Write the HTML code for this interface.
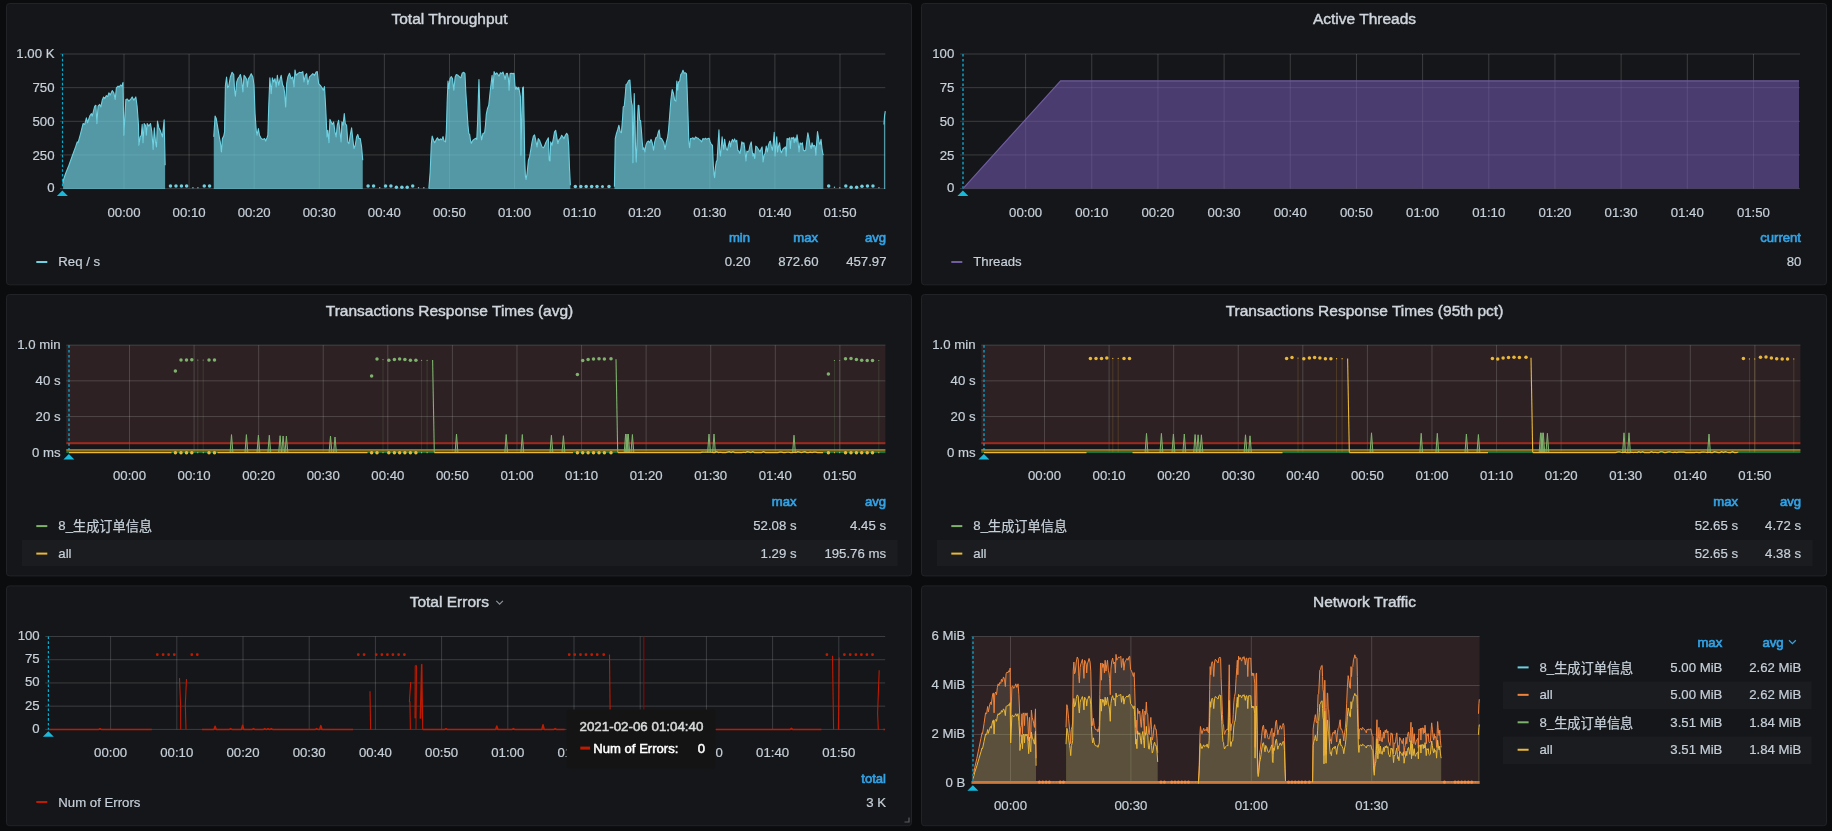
<!DOCTYPE html>
<html lang="en"><head><meta charset="utf-8"><title>JMeter Dashboard</title>
<style>
html,body{margin:0;padding:0;background:#0b0c0e;overflow:hidden}
svg{display:block;will-change:transform}
text{white-space:pre;stroke:#c7d0d9;stroke-width:.2px}
.t{stroke:#cfd5dc;stroke-width:.45px}
.h{stroke:#33a2e5;stroke-width:.65px}
.b{stroke-width:.5px}
.c{stroke:#c7d0d9;stroke-width:.25px}
.bw{stroke:#fff}.bg{stroke:#d8d9da}
</style></head><body>
<svg width="1832" height="831" viewBox="0 0 1832 831" font-family='"Liberation Sans", "Noto Sans CJK SC", sans-serif'>
<rect width="1832" height="831" fill="#0b0c0e"/>
<rect x="6.5" y="3.5" width="905" height="281.3" rx="3" ry="3" fill="#141619" stroke="#212327" stroke-width="1"/>
<rect x="921.5" y="3.5" width="905" height="281.3" rx="3" ry="3" fill="#141619" stroke="#212327" stroke-width="1"/>
<rect x="6.5" y="294.5" width="905" height="281.4" rx="3" ry="3" fill="#141619" stroke="#212327" stroke-width="1"/>
<rect x="921.5" y="294.5" width="905" height="281.4" rx="3" ry="3" fill="#141619" stroke="#212327" stroke-width="1"/>
<rect x="6.5" y="585.9" width="905" height="239.8" rx="3" ry="3" fill="#141619" stroke="#212327" stroke-width="1"/>
<rect x="921.5" y="585.9" width="905" height="239.8" rx="3" ry="3" fill="#141619" stroke="#212327" stroke-width="1"/>
<text x="449.5" y="24.3" text-anchor="middle" class="t" font-size="15.5" fill="#cfd5dc">Total Throughput</text>
<line x1="60" y1="188.6" x2="885.3" y2="188.6" stroke="rgba(200,200,200,0.22)" stroke-width="1"/>
<line x1="60" y1="154.95" x2="885.3" y2="154.95" stroke="rgba(200,200,200,0.22)" stroke-width="1"/>
<line x1="60" y1="121.3" x2="885.3" y2="121.3" stroke="rgba(200,200,200,0.22)" stroke-width="1"/>
<line x1="60" y1="87.65" x2="885.3" y2="87.65" stroke="rgba(200,200,200,0.22)" stroke-width="1"/>
<line x1="60" y1="54" x2="885.3" y2="54" stroke="rgba(200,200,200,0.22)" stroke-width="1"/>
<line x1="124" y1="54" x2="124" y2="188.6" stroke="rgba(200,200,200,0.22)" stroke-width="1"/>
<line x1="189.09" y1="54" x2="189.09" y2="188.6" stroke="rgba(200,200,200,0.22)" stroke-width="1"/>
<line x1="254.18" y1="54" x2="254.18" y2="188.6" stroke="rgba(200,200,200,0.22)" stroke-width="1"/>
<line x1="319.27" y1="54" x2="319.27" y2="188.6" stroke="rgba(200,200,200,0.22)" stroke-width="1"/>
<line x1="384.36" y1="54" x2="384.36" y2="188.6" stroke="rgba(200,200,200,0.22)" stroke-width="1"/>
<line x1="449.45" y1="54" x2="449.45" y2="188.6" stroke="rgba(200,200,200,0.22)" stroke-width="1"/>
<line x1="514.54" y1="54" x2="514.54" y2="188.6" stroke="rgba(200,200,200,0.22)" stroke-width="1"/>
<line x1="579.63" y1="54" x2="579.63" y2="188.6" stroke="rgba(200,200,200,0.22)" stroke-width="1"/>
<line x1="644.72" y1="54" x2="644.72" y2="188.6" stroke="rgba(200,200,200,0.22)" stroke-width="1"/>
<line x1="709.81" y1="54" x2="709.81" y2="188.6" stroke="rgba(200,200,200,0.22)" stroke-width="1"/>
<line x1="774.9" y1="54" x2="774.9" y2="188.6" stroke="rgba(200,200,200,0.22)" stroke-width="1"/>
<line x1="839.99" y1="54" x2="839.99" y2="188.6" stroke="rgba(200,200,200,0.22)" stroke-width="1"/>
<text x="54.5" y="191.5" text-anchor="end" font-size="13.2" fill="#c7d0d9">0</text>
<text x="54.5" y="159.65" text-anchor="end" font-size="13.2" fill="#c7d0d9">250</text>
<text x="54.5" y="126" text-anchor="end" font-size="13.2" fill="#c7d0d9">500</text>
<text x="54.5" y="92.35" text-anchor="end" font-size="13.2" fill="#c7d0d9">750</text>
<text x="54.5" y="57.6" text-anchor="end" font-size="13.2" fill="#c7d0d9">1.00 K</text>
<text x="124" y="216.7" text-anchor="middle" font-size="13.2" fill="#c7d0d9">00:00</text>
<text x="189.09" y="216.7" text-anchor="middle" font-size="13.2" fill="#c7d0d9">00:10</text>
<text x="254.18" y="216.7" text-anchor="middle" font-size="13.2" fill="#c7d0d9">00:20</text>
<text x="319.27" y="216.7" text-anchor="middle" font-size="13.2" fill="#c7d0d9">00:30</text>
<text x="384.36" y="216.7" text-anchor="middle" font-size="13.2" fill="#c7d0d9">00:40</text>
<text x="449.45" y="216.7" text-anchor="middle" font-size="13.2" fill="#c7d0d9">00:50</text>
<text x="514.54" y="216.7" text-anchor="middle" font-size="13.2" fill="#c7d0d9">01:00</text>
<text x="579.63" y="216.7" text-anchor="middle" font-size="13.2" fill="#c7d0d9">01:10</text>
<text x="644.72" y="216.7" text-anchor="middle" font-size="13.2" fill="#c7d0d9">01:20</text>
<text x="709.81" y="216.7" text-anchor="middle" font-size="13.2" fill="#c7d0d9">01:30</text>
<text x="774.9" y="216.7" text-anchor="middle" font-size="13.2" fill="#c7d0d9">01:40</text>
<text x="839.99" y="216.7" text-anchor="middle" font-size="13.2" fill="#c7d0d9">01:50</text>
<path d="M63.1 183.51 L63.1 181.02 L65.59 173.52 L68.92 165.2 L72.25 156.05 L75.58 146.89 L77.25 141.9 L78.08 142.73 L80.58 133.57 L83.07 123.58 L84.74 124.42 L86.4 117.76 L87.57 122.75 L89.73 116.09 L91.4 113.59 L92.23 116.09 L94.73 106.1 L95.89 105.27 L96.89 123.58 L98.06 106.1 L99.72 104.44 L100.89 106.94 L102.22 100.28 L103.55 96.95 L104.72 98.61 L106.38 95.62 L107.71 96.61 L108.88 92.79 L110.21 94.95 L112.21 90.62 L113.87 92.79 L115.2 99.44 L116.37 87.79 L118.03 86.13 L119.2 86.96 L120.53 84.96 L121.86 86.13 L123.03 82.46 L123.86 135.24 L125.86 99.44 L127.19 98.95 L128.85 101.11 L130.52 99.44 L132.18 96.95 L133.85 100.28 L135.85 96.95 L137.18 106.94 L138.51 125.25 L138.84 145.22 L140.17 136.9 L141.34 135.24 L142.17 124.42 L143 142.73 L144.17 123.58 L145.5 125.25 L146.33 135.24 L147.17 123.58 L148.83 126.08 L150.5 123.58 L151.83 131.91 L153.16 149.39 L154.32 127.74 L155.49 141.9 L156.49 146.89 L157.49 121.09 L158.82 127.74 L160.15 130.24 L161.32 133.57 L162.48 136.9 L164.15 119.92 L165.14 165.2 L165.14 189.1 L63.1 189.1 Z" fill="#6ed0e0" fill-opacity="0.7" stroke="none"/>
<path d="M213.75 136.9 L215.09 116.09 L216.25 118.59 L217.92 128.58 L219.58 138.57 L220.41 142.73 L221.41 151.88 L222.41 138.57 L223.74 136.07 L224.58 131.91 L225.41 85.29 L226.57 76.97 L227.57 87.79 L228.74 86.13 L230.4 76.97 L232.07 72.31 L233.73 74.47 L234.56 90.29 L235.4 96.12 L236.73 81.97 L237.89 78.64 L239.06 76.97 L240.39 74.47 L241.72 80.3 L242.89 91.95 L244.05 75.31 L245.38 76.97 L246.72 79.47 L247.38 86.96 L248.38 78.64 L249.55 76.97 L251.21 73.64 L252.88 76.97 L254.04 85.29 L255.04 113.59 L256.21 130.24 L257.04 135.24 L258.37 128.58 L259.53 135.24 L261.2 138.57 L262.86 139.4 L264.53 138.57 L265.69 141.06 L267.03 137.73 L267.86 135.24 L268.69 106.94 L269.86 77.8 L271.19 93.62 L272.35 77.8 L273.68 81.97 L275.02 78.64 L276.18 86.96 L277.35 75.31 L278.68 85.29 L280.01 79.47 L281.18 75.31 L282.51 84.46 L283.67 86.96 L284.51 91.95 L285.67 106.94 L286.67 83.63 L287.83 76.97 L289.5 73.31 L291.16 78.64 L292.83 76.97 L293.99 86.96 L294.99 69.98 L296.16 75.31 L297.82 73.64 L299.49 72.31 L301.15 72.81 L302.82 71.64 L303.98 81.97 L305.31 75.31 L306.65 73.64 L307.81 84.46 L309.48 76.97 L311.14 75.31 L312.81 73.64 L314.47 75.31 L316.14 71.98 L317.3 71.64 L318.63 83.63 L320.3 85.29 L321.96 87.79 L323.29 90.29 L324.46 86.63 L325.29 100.28 L326.12 116.92 L326.96 136.9 L327.79 130.24 L328.95 142.73 L329.95 119.42 L331.12 121.92 L332.28 124.42 L333.61 121.92 L334.95 131.91 L336.11 136.9 L337.28 125.25 L338.61 120.25 L339.94 131.91 L341.11 141.9 L341.94 121.92 L343.1 125.25 L344.27 113.59 L345.27 123.58 L346.6 125.25 L347.76 141.9 L348.93 143.56 L350.26 135.24 L351.59 127.74 L352.76 138.57 L353.92 148.55 L355.26 145.22 L356.59 136.9 L357.75 134.4 L358.92 138.57 L360.25 138.57 L361.58 146.89 L362.75 160.21 L362.75 189.1 L213.75 189.1 Z" fill="#6ed0e0" fill-opacity="0.7" stroke="none"/>
<path d="M428.85 188.51 L430.18 171.86 L431.34 143.56 L432.18 136.07 L433.51 140.23 L434.67 142.73 L436.34 139.4 L437.5 137.73 L438.84 140.23 L440.5 138.9 L441.83 139.9 L443 136.57 L444.16 141.06 L445.5 141.9 L446.33 131.91 L447.16 101.94 L447.99 81.13 L448.82 88.62 L449.99 78.64 L451.32 76.64 L452.49 78.64 L453.82 90.29 L455.15 76.97 L456.32 74.47 L457.98 75.31 L459.65 76.97 L460.81 77.8 L462.14 73.31 L463.81 72.31 L464.97 73.64 L465.8 91.95 L466.8 106.94 L467.97 125.25 L468.8 133.57 L469.63 134.4 L470.47 140.23 L471.3 143.23 L472.96 140.23 L474.63 138.9 L475.79 138.23 L476.79 139.4 L477.62 121.92 L478.46 93.62 L478.96 79.47 L479.62 101.94 L480.45 131.91 L481.62 139.9 L482.95 133.57 L484.62 132.74 L485.45 125.25 L486.28 114.43 L487.45 108.6 L488.78 105.27 L490.11 91.95 L491.28 81.97 L492.11 75.31 L492.94 88.62 L494.11 71.64 L495.44 74.47 L496.77 72.81 L497.93 74.47 L499.1 76.14 L500.43 72.81 L501.76 73.64 L502.93 71.98 L504.09 75.31 L505.09 79.47 L506.26 73.64 L507.42 73.31 L508.42 78.64 L509.09 90.29 L510.09 73.64 L511.25 73.31 L512.92 73.64 L514.08 73.31 L514.91 85.29 L515.75 89.46 L516.75 86.96 L517.91 89.46 L518.74 87.29 L519.58 91.95 L520.41 96.95 L520.91 155.21 L521.74 118.59 L522.57 87.79 L523.4 86.96 L524.07 118.59 L524.74 160.21 L525.4 176.02 L526.07 179.35 L527.07 173.52 L528.4 160.21 L529.56 156.88 L530.73 150.22 L532.06 141.9 L533.39 136.07 L534.56 134.9 L535.72 140.23 L537.05 146.89 L538.22 138.57 L539.55 140.23 L540.72 143.56 L542.05 146.89 L543.38 147.72 L544.55 146.06 L545.71 142.73 L547.04 140.23 L548.38 137.73 L549.21 160.21 L550.04 161.04 L550.71 141.9 L552.04 145.22 L553.37 138.57 L554.53 131.91 L555.7 130.24 L557.03 138.57 L557.86 143.56 L559.03 139.4 L560.36 138.57 L561.69 135.24 L562.86 136.9 L564.02 138.57 L565.36 135.24 L566.69 133.24 L567.85 135.24 L568.68 145.22 L569.52 168.53 L570.35 185.18 L570.35 189.1 L428.85 189.1 Z" fill="#6ed0e0" fill-opacity="0.7" stroke="none"/>
<path d="M614.42 186.84 L615.25 138.57 L616.41 133.57 L617.75 129.41 L618.91 125.25 L620.24 131.91 L621.41 132.74 L622.57 118.59 L623.24 106.94 L624.24 106.1 L625.24 95.28 L626.07 84.46 L627.24 83.63 L628.57 80.63 L629.9 79.97 L630.57 90.29 L631.4 101.94 L632.23 105.27 L632.9 162.7 L633.56 126.91 L634.23 93.62 L634.89 118.59 L635.56 148.55 L636.23 161.87 L636.89 145.22 L637.56 118.59 L638.22 105.27 L638.89 105.6 L639.72 120.25 L640.55 120.59 L641.39 130.24 L642.22 141.9 L643.05 149.39 L643.88 147.72 L644.88 151.88 L645.88 145.22 L647.21 141.9 L648.54 141.06 L649.71 142.73 L651.04 139.4 L652.21 142.73 L653.54 150.22 L654.7 141.9 L655.87 137.73 L657.2 136.9 L658.37 131.91 L659.2 129.91 L660.2 138.57 L661.36 138.23 L662.53 140.23 L663.86 142.73 L665.02 149.39 L666.36 141.9 L667.52 137.73 L668.52 130.24 L669.69 115.26 L670.85 100.28 L672.18 89.46 L673.51 93.62 L674.68 100.28 L675.85 101.11 L676.84 81.13 L677.68 90.29 L678.51 81.97 L679.67 81.13 L680.84 74.47 L681.84 73.31 L683 70.31 L684.17 73.31 L685.5 72.81 L686.5 73.64 L687.17 90.29 L688 115.26 L688.83 141.9 L689.66 147.72 L690.5 138.57 L691.83 138.23 L692.99 137.73 L694.16 139.4 L695.49 136.9 L696.82 137.73 L697.99 138.23 L699.15 139.4 L700.48 140.23 L701.65 141.9 L702.98 138.57 L704.15 139.4 L705.48 138.23 L706.64 139.4 L707.97 138.57 L709.14 138.23 L710.14 141.9 L711.3 144.39 L712.47 145.22 L713.3 165.2 L714.13 175.19 L714.63 177.69 L715.47 166.87 L716.3 161.87 L717.13 160.21 L717.96 145.22 L718.96 129.91 L719.79 151.88 L720.46 156.05 L721.29 146.89 L722.12 136.9 L722.96 145.22 L723.79 149.39 L724.62 139.4 L725.45 145.22 L726.45 149.39 L727.45 150.22 L728.45 145.22 L729.62 141.06 L730.45 146.89 L731.45 141.9 L732.45 139.4 L733.45 141.9 L734.61 138.9 L735.78 141.9 L736.77 140.23 L737.77 150.22 L738.77 151.05 L739.94 153.55 L740.94 148.55 L741.77 141.9 L742.93 143.56 L743.93 142.73 L744.93 150.22 L745.93 161.04 L746.93 151.05 L747.93 151.88 L749.09 150.22 L750.09 145.22 L751.26 141.9 L752.09 150.22 L752.92 156.05 L753.75 153.55 L754.75 158.54 L755.75 146.06 L756.75 146.89 L757.92 148.55 L759.08 150.22 L760.08 151.88 L761.25 148.55 L762.08 146.89 L763.08 161.87 L764.08 155.21 L765.07 153.55 L766.24 146.06 L767.41 151.88 L768.4 145.22 L769.57 141.9 L770.4 141.06 L771.4 146.89 L772.4 150.22 L773.4 141.9 L774.23 132.24 L775.06 156.05 L775.9 145.22 L776.73 136.9 L777.56 151.88 L778.39 146.89 L779.56 142.73 L780.39 150.22 L781.39 152.72 L782.39 150.22 L783.39 148.55 L784.55 147.72 L785.38 146.89 L786.22 156.05 L787.05 138.57 L788.38 139.4 L789.55 137.73 L790.38 148.55 L791.21 137.73 L792.38 138.57 L793.38 137.23 L794.21 142.73 L795.04 137.73 L796.21 141.9 L797.04 134.9 L798.04 141.9 L799.04 151.88 L800.03 142.73 L801.2 144.39 L802.36 142.73 L803.36 150.22 L804.53 151.05 L805.69 150.22 L806.69 141.9 L807.86 132.74 L809.02 138.57 L810.02 145.22 L811.19 148.55 L812.02 142.73 L813.02 146.89 L814.02 145.22 L815.02 146.06 L815.85 155.21 L816.68 142.73 L817.51 131.57 L818.35 136.9 L819.18 142.73 L820.01 144.39 L821.01 139.4 L822.01 148.55 L822.84 153.55 L823.34 155.21 L823.34 189.1 L614.42 189.1 Z" fill="#6ed0e0" fill-opacity="0.7" stroke="none"/>
<path d="M883.94 124.42 L884.6 115.26 L885.27 111.1 L885.27 189.1 L883.94 189.1 Z" fill="#6ed0e0" fill-opacity="0.7" stroke="none"/>
<path d="M63.1 183.51 L63.1 181.02 L65.59 173.52 L68.92 165.2 L72.25 156.05 L75.58 146.89 L77.25 141.9 L78.08 142.73 L80.58 133.57 L83.07 123.58 L84.74 124.42 L86.4 117.76 L87.57 122.75 L89.73 116.09 L91.4 113.59 L92.23 116.09 L94.73 106.1 L95.89 105.27 L96.89 123.58 L98.06 106.1 L99.72 104.44 L100.89 106.94 L102.22 100.28 L103.55 96.95 L104.72 98.61 L106.38 95.62 L107.71 96.61 L108.88 92.79 L110.21 94.95 L112.21 90.62 L113.87 92.79 L115.2 99.44 L116.37 87.79 L118.03 86.13 L119.2 86.96 L120.53 84.96 L121.86 86.13 L123.03 82.46 L123.86 135.24 L125.86 99.44 L127.19 98.95 L128.85 101.11 L130.52 99.44 L132.18 96.95 L133.85 100.28 L135.85 96.95 L137.18 106.94 L138.51 125.25 L138.84 145.22 L140.17 136.9 L141.34 135.24 L142.17 124.42 L143 142.73 L144.17 123.58 L145.5 125.25 L146.33 135.24 L147.17 123.58 L148.83 126.08 L150.5 123.58 L151.83 131.91 L153.16 149.39 L154.32 127.74 L155.49 141.9 L156.49 146.89 L157.49 121.09 L158.82 127.74 L160.15 130.24 L161.32 133.57 L162.48 136.9 L164.15 119.92 L165.14 165.2" fill="none" stroke="#6ed0e0" stroke-width="1.1" stroke-linejoin="round"/>
<path d="M213.75 136.9 L215.09 116.09 L216.25 118.59 L217.92 128.58 L219.58 138.57 L220.41 142.73 L221.41 151.88 L222.41 138.57 L223.74 136.07 L224.58 131.91 L225.41 85.29 L226.57 76.97 L227.57 87.79 L228.74 86.13 L230.4 76.97 L232.07 72.31 L233.73 74.47 L234.56 90.29 L235.4 96.12 L236.73 81.97 L237.89 78.64 L239.06 76.97 L240.39 74.47 L241.72 80.3 L242.89 91.95 L244.05 75.31 L245.38 76.97 L246.72 79.47 L247.38 86.96 L248.38 78.64 L249.55 76.97 L251.21 73.64 L252.88 76.97 L254.04 85.29 L255.04 113.59 L256.21 130.24 L257.04 135.24 L258.37 128.58 L259.53 135.24 L261.2 138.57 L262.86 139.4 L264.53 138.57 L265.69 141.06 L267.03 137.73 L267.86 135.24 L268.69 106.94 L269.86 77.8 L271.19 93.62 L272.35 77.8 L273.68 81.97 L275.02 78.64 L276.18 86.96 L277.35 75.31 L278.68 85.29 L280.01 79.47 L281.18 75.31 L282.51 84.46 L283.67 86.96 L284.51 91.95 L285.67 106.94 L286.67 83.63 L287.83 76.97 L289.5 73.31 L291.16 78.64 L292.83 76.97 L293.99 86.96 L294.99 69.98 L296.16 75.31 L297.82 73.64 L299.49 72.31 L301.15 72.81 L302.82 71.64 L303.98 81.97 L305.31 75.31 L306.65 73.64 L307.81 84.46 L309.48 76.97 L311.14 75.31 L312.81 73.64 L314.47 75.31 L316.14 71.98 L317.3 71.64 L318.63 83.63 L320.3 85.29 L321.96 87.79 L323.29 90.29 L324.46 86.63 L325.29 100.28 L326.12 116.92 L326.96 136.9 L327.79 130.24 L328.95 142.73 L329.95 119.42 L331.12 121.92 L332.28 124.42 L333.61 121.92 L334.95 131.91 L336.11 136.9 L337.28 125.25 L338.61 120.25 L339.94 131.91 L341.11 141.9 L341.94 121.92 L343.1 125.25 L344.27 113.59 L345.27 123.58 L346.6 125.25 L347.76 141.9 L348.93 143.56 L350.26 135.24 L351.59 127.74 L352.76 138.57 L353.92 148.55 L355.26 145.22 L356.59 136.9 L357.75 134.4 L358.92 138.57 L360.25 138.57 L361.58 146.89 L362.75 160.21" fill="none" stroke="#6ed0e0" stroke-width="1.1" stroke-linejoin="round"/>
<path d="M428.85 188.51 L430.18 171.86 L431.34 143.56 L432.18 136.07 L433.51 140.23 L434.67 142.73 L436.34 139.4 L437.5 137.73 L438.84 140.23 L440.5 138.9 L441.83 139.9 L443 136.57 L444.16 141.06 L445.5 141.9 L446.33 131.91 L447.16 101.94 L447.99 81.13 L448.82 88.62 L449.99 78.64 L451.32 76.64 L452.49 78.64 L453.82 90.29 L455.15 76.97 L456.32 74.47 L457.98 75.31 L459.65 76.97 L460.81 77.8 L462.14 73.31 L463.81 72.31 L464.97 73.64 L465.8 91.95 L466.8 106.94 L467.97 125.25 L468.8 133.57 L469.63 134.4 L470.47 140.23 L471.3 143.23 L472.96 140.23 L474.63 138.9 L475.79 138.23 L476.79 139.4 L477.62 121.92 L478.46 93.62 L478.96 79.47 L479.62 101.94 L480.45 131.91 L481.62 139.9 L482.95 133.57 L484.62 132.74 L485.45 125.25 L486.28 114.43 L487.45 108.6 L488.78 105.27 L490.11 91.95 L491.28 81.97 L492.11 75.31 L492.94 88.62 L494.11 71.64 L495.44 74.47 L496.77 72.81 L497.93 74.47 L499.1 76.14 L500.43 72.81 L501.76 73.64 L502.93 71.98 L504.09 75.31 L505.09 79.47 L506.26 73.64 L507.42 73.31 L508.42 78.64 L509.09 90.29 L510.09 73.64 L511.25 73.31 L512.92 73.64 L514.08 73.31 L514.91 85.29 L515.75 89.46 L516.75 86.96 L517.91 89.46 L518.74 87.29 L519.58 91.95 L520.41 96.95 L520.91 155.21 L521.74 118.59 L522.57 87.79 L523.4 86.96 L524.07 118.59 L524.74 160.21 L525.4 176.02 L526.07 179.35 L527.07 173.52 L528.4 160.21 L529.56 156.88 L530.73 150.22 L532.06 141.9 L533.39 136.07 L534.56 134.9 L535.72 140.23 L537.05 146.89 L538.22 138.57 L539.55 140.23 L540.72 143.56 L542.05 146.89 L543.38 147.72 L544.55 146.06 L545.71 142.73 L547.04 140.23 L548.38 137.73 L549.21 160.21 L550.04 161.04 L550.71 141.9 L552.04 145.22 L553.37 138.57 L554.53 131.91 L555.7 130.24 L557.03 138.57 L557.86 143.56 L559.03 139.4 L560.36 138.57 L561.69 135.24 L562.86 136.9 L564.02 138.57 L565.36 135.24 L566.69 133.24 L567.85 135.24 L568.68 145.22 L569.52 168.53 L570.35 185.18" fill="none" stroke="#6ed0e0" stroke-width="1.1" stroke-linejoin="round"/>
<path d="M614.42 186.84 L615.25 138.57 L616.41 133.57 L617.75 129.41 L618.91 125.25 L620.24 131.91 L621.41 132.74 L622.57 118.59 L623.24 106.94 L624.24 106.1 L625.24 95.28 L626.07 84.46 L627.24 83.63 L628.57 80.63 L629.9 79.97 L630.57 90.29 L631.4 101.94 L632.23 105.27 L632.9 162.7 L633.56 126.91 L634.23 93.62 L634.89 118.59 L635.56 148.55 L636.23 161.87 L636.89 145.22 L637.56 118.59 L638.22 105.27 L638.89 105.6 L639.72 120.25 L640.55 120.59 L641.39 130.24 L642.22 141.9 L643.05 149.39 L643.88 147.72 L644.88 151.88 L645.88 145.22 L647.21 141.9 L648.54 141.06 L649.71 142.73 L651.04 139.4 L652.21 142.73 L653.54 150.22 L654.7 141.9 L655.87 137.73 L657.2 136.9 L658.37 131.91 L659.2 129.91 L660.2 138.57 L661.36 138.23 L662.53 140.23 L663.86 142.73 L665.02 149.39 L666.36 141.9 L667.52 137.73 L668.52 130.24 L669.69 115.26 L670.85 100.28 L672.18 89.46 L673.51 93.62 L674.68 100.28 L675.85 101.11 L676.84 81.13 L677.68 90.29 L678.51 81.97 L679.67 81.13 L680.84 74.47 L681.84 73.31 L683 70.31 L684.17 73.31 L685.5 72.81 L686.5 73.64 L687.17 90.29 L688 115.26 L688.83 141.9 L689.66 147.72 L690.5 138.57 L691.83 138.23 L692.99 137.73 L694.16 139.4 L695.49 136.9 L696.82 137.73 L697.99 138.23 L699.15 139.4 L700.48 140.23 L701.65 141.9 L702.98 138.57 L704.15 139.4 L705.48 138.23 L706.64 139.4 L707.97 138.57 L709.14 138.23 L710.14 141.9 L711.3 144.39 L712.47 145.22 L713.3 165.2 L714.13 175.19 L714.63 177.69 L715.47 166.87 L716.3 161.87 L717.13 160.21 L717.96 145.22 L718.96 129.91 L719.79 151.88 L720.46 156.05 L721.29 146.89 L722.12 136.9 L722.96 145.22 L723.79 149.39 L724.62 139.4 L725.45 145.22 L726.45 149.39 L727.45 150.22 L728.45 145.22 L729.62 141.06 L730.45 146.89 L731.45 141.9 L732.45 139.4 L733.45 141.9 L734.61 138.9 L735.78 141.9 L736.77 140.23 L737.77 150.22 L738.77 151.05 L739.94 153.55 L740.94 148.55 L741.77 141.9 L742.93 143.56 L743.93 142.73 L744.93 150.22 L745.93 161.04 L746.93 151.05 L747.93 151.88 L749.09 150.22 L750.09 145.22 L751.26 141.9 L752.09 150.22 L752.92 156.05 L753.75 153.55 L754.75 158.54 L755.75 146.06 L756.75 146.89 L757.92 148.55 L759.08 150.22 L760.08 151.88 L761.25 148.55 L762.08 146.89 L763.08 161.87 L764.08 155.21 L765.07 153.55 L766.24 146.06 L767.41 151.88 L768.4 145.22 L769.57 141.9 L770.4 141.06 L771.4 146.89 L772.4 150.22 L773.4 141.9 L774.23 132.24 L775.06 156.05 L775.9 145.22 L776.73 136.9 L777.56 151.88 L778.39 146.89 L779.56 142.73 L780.39 150.22 L781.39 152.72 L782.39 150.22 L783.39 148.55 L784.55 147.72 L785.38 146.89 L786.22 156.05 L787.05 138.57 L788.38 139.4 L789.55 137.73 L790.38 148.55 L791.21 137.73 L792.38 138.57 L793.38 137.23 L794.21 142.73 L795.04 137.73 L796.21 141.9 L797.04 134.9 L798.04 141.9 L799.04 151.88 L800.03 142.73 L801.2 144.39 L802.36 142.73 L803.36 150.22 L804.53 151.05 L805.69 150.22 L806.69 141.9 L807.86 132.74 L809.02 138.57 L810.02 145.22 L811.19 148.55 L812.02 142.73 L813.02 146.89 L814.02 145.22 L815.02 146.06 L815.85 155.21 L816.68 142.73 L817.51 131.57 L818.35 136.9 L819.18 142.73 L820.01 144.39 L821.01 139.4 L822.01 148.55 L822.84 153.55 L823.34 155.21" fill="none" stroke="#6ed0e0" stroke-width="1.1" stroke-linejoin="round"/>
<path d="M883.94 124.42 L884.6 115.26 L885.27 111.1" fill="none" stroke="#6ed0e0" stroke-width="1.1" stroke-linejoin="round"/>
<circle cx="170.47" cy="186.01" r="1.75" fill="#6ed0e0"/>
<circle cx="175.97" cy="186.01" r="1.75" fill="#6ed0e0"/>
<circle cx="181.46" cy="186.01" r="1.75" fill="#6ed0e0"/>
<circle cx="186.62" cy="186.01" r="1.75" fill="#6ed0e0"/>
<circle cx="192.95" cy="187.68" r="0.7" fill="#6ed0e0"/>
<circle cx="197.94" cy="187.68" r="0.7" fill="#6ed0e0"/>
<circle cx="204.27" cy="186.01" r="1.75" fill="#6ed0e0"/>
<circle cx="209.59" cy="186.01" r="1.75" fill="#6ed0e0"/>
<circle cx="368.09" cy="186.01" r="1.75" fill="#6ed0e0"/>
<circle cx="373.58" cy="186.01" r="1.75" fill="#6ed0e0"/>
<circle cx="379.74" cy="187.68" r="0.7" fill="#6ed0e0"/>
<circle cx="385.57" cy="186.01" r="1.75" fill="#6ed0e0"/>
<circle cx="390.89" cy="186.01" r="1.75" fill="#6ed0e0"/>
<circle cx="396.39" cy="187.18" r="1.75" fill="#6ed0e0"/>
<circle cx="401.88" cy="187.18" r="1.75" fill="#6ed0e0"/>
<circle cx="407.21" cy="187.18" r="1.75" fill="#6ed0e0"/>
<circle cx="412.7" cy="186.01" r="1.75" fill="#6ed0e0"/>
<circle cx="418.53" cy="187.68" r="0.7" fill="#6ed0e0"/>
<circle cx="423.85" cy="187.68" r="0.7" fill="#6ed0e0"/>
<circle cx="575.34" cy="186.51" r="1.75" fill="#6ed0e0"/>
<circle cx="580.84" cy="186.51" r="1.75" fill="#6ed0e0"/>
<circle cx="586.16" cy="186.51" r="1.75" fill="#6ed0e0"/>
<circle cx="591.66" cy="186.51" r="1.75" fill="#6ed0e0"/>
<circle cx="596.99" cy="186.51" r="1.75" fill="#6ed0e0"/>
<circle cx="602.48" cy="186.51" r="1.5" fill="#6ed0e0"/>
<circle cx="608.97" cy="186.51" r="1.75" fill="#6ed0e0"/>
<circle cx="828.67" cy="186.01" r="1.75" fill="#6ed0e0"/>
<circle cx="834.49" cy="187.18" r="0.7" fill="#6ed0e0"/>
<circle cx="839.82" cy="187.68" r="0.7" fill="#6ed0e0"/>
<circle cx="845.81" cy="186.01" r="1.75" fill="#6ed0e0"/>
<circle cx="851.14" cy="187.18" r="1.75" fill="#6ed0e0"/>
<circle cx="856.63" cy="187.18" r="1.75" fill="#6ed0e0"/>
<circle cx="861.96" cy="186.18" r="1.75" fill="#6ed0e0"/>
<circle cx="867.46" cy="186.01" r="1.75" fill="#6ed0e0"/>
<circle cx="872.95" cy="186.01" r="1.75" fill="#6ed0e0"/>
<circle cx="878.94" cy="187.68" r="0.7" fill="#6ed0e0"/>
<line x1="62.5" y1="54" x2="62.5" y2="188.6" stroke="#00c8f0" stroke-width="1.2" stroke-dasharray="2.6,2.2" opacity="0.85"/>
<path d="M56.9 195.9 L67.9 195.9 L62.4 190.4 Z" fill="#19b9dc"/>
<rect x="36.3" y="261" width="11" height="2" fill="#6ed0e0"/>
<text x="58.3" y="266.2" font-size="13.2" fill="#c7d0d9">Req / s</text>
<text x="750" y="242" text-anchor="end" class="h" font-size="13.1" fill="#33a2e5">min</text>
<text x="750.5" y="266.1" text-anchor="end" font-size="13.2" fill="#c7d0d9">0.20</text>
<text x="818" y="242" text-anchor="end" class="h" font-size="13.1" fill="#33a2e5">max</text>
<text x="818.5" y="266.1" text-anchor="end" font-size="13.2" fill="#c7d0d9">872.60</text>
<text x="886" y="242" text-anchor="end" class="h" font-size="13.1" fill="#33a2e5">avg</text>
<text x="886.5" y="266.1" text-anchor="end" font-size="13.2" fill="#c7d0d9">457.97</text>
<text x="1364.5" y="24.3" text-anchor="middle" class="t" font-size="15.5" fill="#cfd5dc">Active Threads</text>
<line x1="960" y1="188.6" x2="1800" y2="188.6" stroke="rgba(200,200,200,0.22)" stroke-width="1"/>
<line x1="960" y1="154.95" x2="1800" y2="154.95" stroke="rgba(200,200,200,0.22)" stroke-width="1"/>
<line x1="960" y1="121.3" x2="1800" y2="121.3" stroke="rgba(200,200,200,0.22)" stroke-width="1"/>
<line x1="960" y1="87.65" x2="1800" y2="87.65" stroke="rgba(200,200,200,0.22)" stroke-width="1"/>
<line x1="960" y1="54" x2="1800" y2="54" stroke="rgba(200,200,200,0.22)" stroke-width="1"/>
<line x1="1025.6" y1="54" x2="1025.6" y2="188.6" stroke="rgba(200,200,200,0.22)" stroke-width="1"/>
<line x1="1091.77" y1="54" x2="1091.77" y2="188.6" stroke="rgba(200,200,200,0.22)" stroke-width="1"/>
<line x1="1157.94" y1="54" x2="1157.94" y2="188.6" stroke="rgba(200,200,200,0.22)" stroke-width="1"/>
<line x1="1224.11" y1="54" x2="1224.11" y2="188.6" stroke="rgba(200,200,200,0.22)" stroke-width="1"/>
<line x1="1290.28" y1="54" x2="1290.28" y2="188.6" stroke="rgba(200,200,200,0.22)" stroke-width="1"/>
<line x1="1356.45" y1="54" x2="1356.45" y2="188.6" stroke="rgba(200,200,200,0.22)" stroke-width="1"/>
<line x1="1422.62" y1="54" x2="1422.62" y2="188.6" stroke="rgba(200,200,200,0.22)" stroke-width="1"/>
<line x1="1488.79" y1="54" x2="1488.79" y2="188.6" stroke="rgba(200,200,200,0.22)" stroke-width="1"/>
<line x1="1554.96" y1="54" x2="1554.96" y2="188.6" stroke="rgba(200,200,200,0.22)" stroke-width="1"/>
<line x1="1621.13" y1="54" x2="1621.13" y2="188.6" stroke="rgba(200,200,200,0.22)" stroke-width="1"/>
<line x1="1687.3" y1="54" x2="1687.3" y2="188.6" stroke="rgba(200,200,200,0.22)" stroke-width="1"/>
<line x1="1753.47" y1="54" x2="1753.47" y2="188.6" stroke="rgba(200,200,200,0.22)" stroke-width="1"/>
<text x="954.3" y="191.5" text-anchor="end" font-size="13.2" fill="#c7d0d9">0</text>
<text x="954.3" y="159.65" text-anchor="end" font-size="13.2" fill="#c7d0d9">25</text>
<text x="954.3" y="126" text-anchor="end" font-size="13.2" fill="#c7d0d9">50</text>
<text x="954.3" y="92.35" text-anchor="end" font-size="13.2" fill="#c7d0d9">75</text>
<text x="954.3" y="57.6" text-anchor="end" font-size="13.2" fill="#c7d0d9">100</text>
<text x="1025.6" y="216.7" text-anchor="middle" font-size="13.2" fill="#c7d0d9">00:00</text>
<text x="1091.77" y="216.7" text-anchor="middle" font-size="13.2" fill="#c7d0d9">00:10</text>
<text x="1157.94" y="216.7" text-anchor="middle" font-size="13.2" fill="#c7d0d9">00:20</text>
<text x="1224.11" y="216.7" text-anchor="middle" font-size="13.2" fill="#c7d0d9">00:30</text>
<text x="1290.28" y="216.7" text-anchor="middle" font-size="13.2" fill="#c7d0d9">00:40</text>
<text x="1356.45" y="216.7" text-anchor="middle" font-size="13.2" fill="#c7d0d9">00:50</text>
<text x="1422.62" y="216.7" text-anchor="middle" font-size="13.2" fill="#c7d0d9">01:00</text>
<text x="1488.79" y="216.7" text-anchor="middle" font-size="13.2" fill="#c7d0d9">01:10</text>
<text x="1554.96" y="216.7" text-anchor="middle" font-size="13.2" fill="#c7d0d9">01:20</text>
<text x="1621.13" y="216.7" text-anchor="middle" font-size="13.2" fill="#c7d0d9">01:30</text>
<text x="1687.3" y="216.7" text-anchor="middle" font-size="13.2" fill="#c7d0d9">01:40</text>
<text x="1753.47" y="216.7" text-anchor="middle" font-size="13.2" fill="#c7d0d9">01:50</text>
<path d="M963 188.6 L1060.6 80.92 L1799 80.92 L1799 188.6 L963 188.6 Z" fill="#7057a8" fill-opacity="0.6"/>
<path d="M963 188.6 L1060.6 80.92 L1799 80.92" fill="none" stroke="#705da0" stroke-width="1.1"/>
<line x1="963" y1="54" x2="963" y2="188.6" stroke="#127c98" stroke-width="2" stroke-dasharray="2.6,2.3"/>
<path d="M957.4 195.9 L968.4 195.9 L962.9 190.4 Z" fill="#19b9dc"/>
<rect x="951.3" y="261" width="11" height="2" fill="#705da0"/>
<text x="973.3" y="266.2" font-size="13.2" fill="#c7d0d9">Threads</text>
<text x="1801" y="242" text-anchor="end" class="h" font-size="13.1" fill="#33a2e5">current</text>
<text x="1801.4" y="266.1" text-anchor="end" font-size="13.2" fill="#c7d0d9">80</text>
<text x="449.5" y="315.6" text-anchor="middle" class="t" font-size="15.5" fill="#cfd5dc">Transactions Response Times (avg)</text>
<rect x="66.3" y="345.1" width="819.1" height="98.27" fill="rgba(234,112,112,0.12)"/>
<line x1="66.3" y1="452.3" x2="885.4" y2="452.3" stroke="rgba(200,200,200,0.22)" stroke-width="1"/>
<line x1="66.3" y1="416.57" x2="885.4" y2="416.57" stroke="rgba(200,200,200,0.22)" stroke-width="1"/>
<line x1="66.3" y1="380.83" x2="885.4" y2="380.83" stroke="rgba(200,200,200,0.22)" stroke-width="1"/>
<line x1="66.3" y1="345.1" x2="885.4" y2="345.1" stroke="rgba(200,200,200,0.22)" stroke-width="1"/>
<line x1="129.5" y1="345.1" x2="129.5" y2="452.3" stroke="rgba(200,200,200,0.22)" stroke-width="1"/>
<line x1="194.08" y1="345.1" x2="194.08" y2="452.3" stroke="rgba(200,200,200,0.22)" stroke-width="1"/>
<line x1="258.66" y1="345.1" x2="258.66" y2="452.3" stroke="rgba(200,200,200,0.22)" stroke-width="1"/>
<line x1="323.24" y1="345.1" x2="323.24" y2="452.3" stroke="rgba(200,200,200,0.22)" stroke-width="1"/>
<line x1="387.82" y1="345.1" x2="387.82" y2="452.3" stroke="rgba(200,200,200,0.22)" stroke-width="1"/>
<line x1="452.4" y1="345.1" x2="452.4" y2="452.3" stroke="rgba(200,200,200,0.22)" stroke-width="1"/>
<line x1="516.98" y1="345.1" x2="516.98" y2="452.3" stroke="rgba(200,200,200,0.22)" stroke-width="1"/>
<line x1="581.56" y1="345.1" x2="581.56" y2="452.3" stroke="rgba(200,200,200,0.22)" stroke-width="1"/>
<line x1="646.14" y1="345.1" x2="646.14" y2="452.3" stroke="rgba(200,200,200,0.22)" stroke-width="1"/>
<line x1="710.72" y1="345.1" x2="710.72" y2="452.3" stroke="rgba(200,200,200,0.22)" stroke-width="1"/>
<line x1="775.3" y1="345.1" x2="775.3" y2="452.3" stroke="rgba(200,200,200,0.22)" stroke-width="1"/>
<line x1="839.88" y1="345.1" x2="839.88" y2="452.3" stroke="rgba(200,200,200,0.22)" stroke-width="1"/>
<text x="60.5" y="456.9" text-anchor="end" font-size="13.2" fill="#c7d0d9">0 ms</text>
<text x="60.5" y="421.07" text-anchor="end" font-size="13.2" fill="#c7d0d9">20 s</text>
<text x="60.5" y="385.23" text-anchor="end" font-size="13.2" fill="#c7d0d9">40 s</text>
<text x="60.5" y="348.7" text-anchor="end" font-size="13.2" fill="#c7d0d9">1.0 min</text>
<text x="129.5" y="479.9" text-anchor="middle" font-size="13.2" fill="#c7d0d9">00:00</text>
<text x="194.08" y="479.9" text-anchor="middle" font-size="13.2" fill="#c7d0d9">00:10</text>
<text x="258.66" y="479.9" text-anchor="middle" font-size="13.2" fill="#c7d0d9">00:20</text>
<text x="323.24" y="479.9" text-anchor="middle" font-size="13.2" fill="#c7d0d9">00:30</text>
<text x="387.82" y="479.9" text-anchor="middle" font-size="13.2" fill="#c7d0d9">00:40</text>
<text x="452.4" y="479.9" text-anchor="middle" font-size="13.2" fill="#c7d0d9">00:50</text>
<text x="516.98" y="479.9" text-anchor="middle" font-size="13.2" fill="#c7d0d9">01:00</text>
<text x="581.56" y="479.9" text-anchor="middle" font-size="13.2" fill="#c7d0d9">01:10</text>
<text x="646.14" y="479.9" text-anchor="middle" font-size="13.2" fill="#c7d0d9">01:20</text>
<text x="710.72" y="479.9" text-anchor="middle" font-size="13.2" fill="#c7d0d9">01:30</text>
<text x="775.3" y="479.9" text-anchor="middle" font-size="13.2" fill="#c7d0d9">01:40</text>
<text x="839.88" y="479.9" text-anchor="middle" font-size="13.2" fill="#c7d0d9">01:50</text>
<line x1="69" y1="345.1" x2="69" y2="449.7" stroke="#127c98" stroke-width="2" stroke-dasharray="2.6,2.3"/>
<line x1="66.3" y1="443.37" x2="885.4" y2="443.37" stroke="rgba(237,46,24,0.65)" stroke-width="2"/>
<line x1="66.3" y1="449.92" x2="885.4" y2="449.92" stroke="rgba(247,149,32,0.65)" stroke-width="2"/>
<line x1="66.3" y1="451.75" x2="885.4" y2="451.75" stroke="rgba(6,163,69,0.75)" stroke-width="1.8"/>
<line x1="197.8" y1="360" x2="197.8" y2="452.3" stroke="#7eb26d" stroke-width="0.8" opacity="0.22"/>
<line x1="203.2" y1="360" x2="203.2" y2="452.3" stroke="#7eb26d" stroke-width="0.8" opacity="0.22"/>
<line x1="383" y1="359.6" x2="383" y2="452.3" stroke="#7eb26d" stroke-width="0.8" opacity="0.22"/>
<line x1="421.6" y1="360.3" x2="421.6" y2="452.3" stroke="#7eb26d" stroke-width="0.8" opacity="0.22"/>
<line x1="427.1" y1="360.3" x2="427.1" y2="452.3" stroke="#7eb26d" stroke-width="0.8" opacity="0.22"/>
<line x1="834.4" y1="360.5" x2="834.4" y2="452.3" stroke="#7eb26d" stroke-width="0.8" opacity="0.22"/>
<line x1="839.7" y1="360.5" x2="839.7" y2="452.3" stroke="#7eb26d" stroke-width="0.8" opacity="0.22"/>
<line x1="878.8" y1="360.5" x2="878.8" y2="452.3" stroke="#7eb26d" stroke-width="0.8" opacity="0.22"/>
<path d="M230.1 452.3 L231.5 434.6 L232.9 452.3" fill="#7eb26d" fill-opacity="0.3" stroke="#7eb26d" stroke-width="1" stroke-linejoin="round"/>
<path d="M245 452.3 L246.4 434.6 L247.8 452.3" fill="#7eb26d" fill-opacity="0.3" stroke="#7eb26d" stroke-width="1" stroke-linejoin="round"/>
<path d="M257 452.3 L258.4 435.2 L259.8 452.3" fill="#7eb26d" fill-opacity="0.3" stroke="#7eb26d" stroke-width="1" stroke-linejoin="round"/>
<path d="M267.9 452.3 L269.3 435.2 L270.7 452.3" fill="#7eb26d" fill-opacity="0.3" stroke="#7eb26d" stroke-width="1" stroke-linejoin="round"/>
<path d="M278.7 452.3 L280.1 435.7 L281.5 452.3" fill="#7eb26d" fill-opacity="0.3" stroke="#7eb26d" stroke-width="1" stroke-linejoin="round"/>
<path d="M281.7 452.3 L283.1 436 L284.5 452.3" fill="#7eb26d" fill-opacity="0.3" stroke="#7eb26d" stroke-width="1" stroke-linejoin="round"/>
<path d="M285 452.3 L286.4 436 L287.8 452.3" fill="#7eb26d" fill-opacity="0.3" stroke="#7eb26d" stroke-width="1" stroke-linejoin="round"/>
<path d="M329.1 452.3 L330.5 436 L331.9 452.3" fill="#7eb26d" fill-opacity="0.3" stroke="#7eb26d" stroke-width="1" stroke-linejoin="round"/>
<path d="M333.6 452.3 L335 437 L336.4 452.3" fill="#7eb26d" fill-opacity="0.3" stroke="#7eb26d" stroke-width="1" stroke-linejoin="round"/>
<path d="M455.1 452.3 L456.5 434 L457.9 452.3" fill="#7eb26d" fill-opacity="0.3" stroke="#7eb26d" stroke-width="1" stroke-linejoin="round"/>
<path d="M504.8 452.3 L506.2 434.5 L507.6 452.3" fill="#7eb26d" fill-opacity="0.3" stroke="#7eb26d" stroke-width="1" stroke-linejoin="round"/>
<path d="M520.9 452.3 L522.3 434.5 L523.7 452.3" fill="#7eb26d" fill-opacity="0.3" stroke="#7eb26d" stroke-width="1" stroke-linejoin="round"/>
<path d="M550 452.3 L551.4 435.2 L552.8 452.3" fill="#7eb26d" fill-opacity="0.3" stroke="#7eb26d" stroke-width="1" stroke-linejoin="round"/>
<path d="M562 452.3 L563.4 435.7 L564.8 452.3" fill="#7eb26d" fill-opacity="0.3" stroke="#7eb26d" stroke-width="1" stroke-linejoin="round"/>
<path d="M624.2 452.3 L625.6 434 L627 452.3" fill="#7eb26d" fill-opacity="0.3" stroke="#7eb26d" stroke-width="1" stroke-linejoin="round"/>
<path d="M625.6 452.3 L627 434 L628.4 452.3" fill="#7eb26d" fill-opacity="0.3" stroke="#7eb26d" stroke-width="1" stroke-linejoin="round"/>
<path d="M626.9 452.3 L628.3 434 L629.7 452.3" fill="#7eb26d" fill-opacity="0.3" stroke="#7eb26d" stroke-width="1" stroke-linejoin="round"/>
<path d="M631 452.3 L632.4 434.5 L633.8 452.3" fill="#7eb26d" fill-opacity="0.3" stroke="#7eb26d" stroke-width="1" stroke-linejoin="round"/>
<path d="M707.6 452.3 L709 434 L710.4 452.3" fill="#7eb26d" fill-opacity="0.3" stroke="#7eb26d" stroke-width="1" stroke-linejoin="round"/>
<path d="M712.6 452.3 L714 434 L715.4 452.3" fill="#7eb26d" fill-opacity="0.3" stroke="#7eb26d" stroke-width="1" stroke-linejoin="round"/>
<path d="M792.6 452.3 L794 435.2 L795.4 452.3" fill="#7eb26d" fill-opacity="0.3" stroke="#7eb26d" stroke-width="1" stroke-linejoin="round"/>
<path d="M432.6 360 L434.3 452.3" stroke="#7eb26d" stroke-width="1.1" fill="none"/>
<path d="M616 359.3 L617.7 452.3" stroke="#7eb26d" stroke-width="1.1" fill="none"/>
<path d="M69 452.6 L70.8 452.6 L72.6 452.6 L74.4 452.6 L76.2 452.6 L78 452.6 L79.8 452.6 L81.6 452.6 L83.4 452.6 L85.2 452.6 L87 452.6 L88.8 452.6 L90.6 452.6 L92.4 452.6 L94.2 452.6 L96 452.6 L97.8 452.6 L99.6 452.6 L101.4 452.6 L103.2 452.6 L105 452.6 L106.8 452.6 L108.6 452.6 L110.4 452.6 L112.2 452.6 L114 452.6 L115.8 452.6 L117.6 452.6 L119.4 452.6 L121.2 452.6 L123 452.6 L124.8 452.6 L126.6 452.6 L128.4 452.6 L130.2 452.6 L132 452.6 L133.8 452.6 L135.6 452.6 L137.4 452.6 L139.2 452.6 L141 452.6 L142.8 452.6 L144.6 452.6 L146.4 452.6 L148.2 452.6 L150 452.6 L151.8 452.6 L153.6 452.6 L155.4 452.6 L157.2 452.6 L159 452.6 L160.8 452.6 L162.6 452.6 L164.4 452.6 L166.2 452.6 L168 452.6 L169.8 452.6 L171.5 452.6" stroke="#eab839" stroke-width="1.1" fill="none"/>
<path d="M217.5 452.6 L219.3 452.6 L221.1 452.6 L222.9 452.6 L224.7 452.6 L226.5 452.6 L228.3 452.6 L230.1 452.6 L231.9 452.6 L233.7 452.6 L235.5 452.6 L237.3 452.6 L239.1 452.6 L240.9 452.6 L242.7 452.6 L244.5 452.6 L246.3 452.6 L248.1 452.6 L249.9 452.6 L251.7 452.6 L253.5 452.6 L255.3 452.6 L257.1 452.6 L258.9 452.6 L260.7 452.6 L262.5 452.6 L264.3 452.6 L266.1 452.6 L267.9 452.6 L269.7 452.6 L271.5 452.6 L273.3 452.6 L275.1 452.6 L276.9 452.6 L278.7 452.6 L280.5 452.6 L282.3 452.6 L284.1 452.6 L285.9 452.6 L287.7 452.6 L289.5 452.6 L291.3 452.6 L293.1 452.6 L294.9 452.6 L296.7 452.6 L298.5 452.6 L300.3 452.6 L302.1 452.6 L303.9 452.6 L305.7 452.6 L307.5 452.6 L309.3 452.6 L311.1 452.6 L312.9 452.6 L314.7 452.6 L316.5 452.6 L318.3 452.6 L320.1 452.6 L321.9 452.6 L323.7 452.6 L325.5 452.6 L327.3 452.6 L329.1 452.6 L330.9 452.6 L332.7 452.6 L334.5 452.6 L336.3 452.6 L338.1 452.6 L339.9 452.6 L341.7 452.6 L343.5 452.6 L345.3 452.6 L347.1 452.6 L348.9 452.6 L350.7 452.6 L352.5 452.6 L354.3 452.6 L356.1 452.6 L357.9 452.6 L359.7 452.6 L361.5 452.6 L363.3 452.6 L365.1 452.6 L366.9 452.6 L367.5 452.6" stroke="#eab839" stroke-width="1.1" fill="none"/>
<path d="M434.3 452.6 L436.1 452.6 L437.9 452.6 L439.7 452.6 L441.5 452.6 L443.3 452.6 L445.1 452.6 L446.9 452.6 L448.7 452.6 L450.5 452.6 L452.3 452.6 L454.1 452.6 L455.9 452.6 L457.7 452.6 L459.5 452.6 L461.3 452.6 L463.1 452.6 L464.9 452.6 L466.7 452.6 L468.5 452.6 L470.3 452.6 L472.1 452.6 L473.9 452.6 L475.7 452.6 L477.5 452.6 L479.3 452.6 L481.1 452.6 L482.9 452.6 L484.7 452.6 L486.5 452.6 L488.3 452.6 L490.1 452.6 L491.9 452.6 L493.7 452.6 L495.5 452.6 L497.3 452.6 L499.1 452.6 L500.9 452.6 L502.7 452.6 L504.5 452.6 L506.3 452.6 L508.1 452.6 L509.9 452.6 L511.7 452.6 L513.5 452.6 L515.3 452.6 L517.1 452.6 L518.9 452.6 L520.7 452.6 L522.5 452.6 L524.3 452.6 L526.1 452.6 L527.9 452.6 L529.7 452.6 L531.5 452.6 L533.3 452.6 L535.1 452.6 L536.9 452.6 L538.7 452.6 L540.5 452.6 L542.3 452.6 L544.1 452.6 L545.9 452.6 L547.7 452.6 L549.5 452.6 L551.3 452.6 L553.1 452.6 L554.9 452.6 L556.7 452.6 L558.5 452.6 L560.3 452.6 L562.1 452.6 L563.9 452.6 L565.7 452.6 L567.5 452.6 L569.3 452.6 L571.1 452.6 L572.9 452.6 L573 452.6" stroke="#eab839" stroke-width="1.1" fill="none"/>
<path d="M617.7 452.6 L619.5 452.6 L621.3 452.6 L623.1 452.6 L624.9 452.6 L626.7 452.6 L628.5 452.6 L630.3 452.6 L632.1 452.6 L633.9 452.6 L635.7 452.6 L637.5 452.6 L639.3 452.6 L641.1 452.6 L642.9 452.6 L644.7 452.6 L646.5 452.6 L648.3 452.6 L650.1 452.6 L651.9 452.6 L653.7 452.6 L655.5 452.6 L657.3 452.6 L659.1 452.6 L660.9 452.6 L662.7 452.6 L664.5 452.6 L666.3 452.6 L668.1 452.6 L669.9 452.6 L671.7 452.6 L673.5 452.6 L675.3 452.6 L677.1 452.6 L678.9 452.6 L680.7 452.6 L682.5 452.6 L684.3 452.6 L686.1 452.6 L687.9 452.6 L689.7 452.6 L691.5 452.6 L693.3 452.6 L695.1 452.6 L696.9 452.6 L698.7 452.6 L700.5 452.6 L702.3 452.1 L704.1 452.3 L705.9 452.1 L707.7 452.3 L709.5 452.3 L711.3 452.3 L713.1 452.6 L714.9 452.6 L716.7 451.7 L718.5 452.6 L720.3 452.3 L722.1 452.6 L723.9 452.6 L725.7 452.6 L727.5 452.1 L729.3 451.7 L731.1 452.6 L732.9 451.7 L734.7 452.6 L736.5 452.6 L738.3 452.6 L740.1 452.6 L741.9 452.6 L743.7 452.3 L745.5 452.6 L747.3 451.7 L749.1 452.1 L750.9 452.6 L752.7 451.7 L754.5 452.6 L756.3 452.6 L758.1 452.6 L759.9 452.6 L761.7 452.6 L763.5 451.7 L765.3 452.6 L767.1 452.6 L768.9 452.6 L770.7 452.6 L772.5 452.6 L774.3 452.6 L776.1 452.6 L777.9 452.6 L779.7 452.1 L781.5 452.1 L783.3 452.6 L785.1 452.6 L786.9 452.3 L788.7 452.3 L790.5 452.6 L792.3 452.6 L794.1 452.3 L795.9 452.6 L797.7 451.7 L799.5 452.1 L801.3 452.6 L803.1 452.1 L804.9 451.7 L806.7 452.6 L808.5 452.6 L810.3 452.1 L812.1 452.6 L813.9 452.1 L815.7 452.1 L817.5 452.6 L819.3 452.6 L821.1 452.6 L822.9 452.6 L823 452.6" stroke="#eab839" stroke-width="1.1" fill="none"/>
<circle cx="175.4" cy="371.1" r="1.75" fill="#7eb26d"/>
<circle cx="175.4" cy="452.7" r="1.75" fill="#eab839"/>
<circle cx="181" cy="360" r="1.75" fill="#7eb26d"/>
<circle cx="181" cy="452.7" r="1.75" fill="#eab839"/>
<circle cx="186.5" cy="360" r="1.75" fill="#7eb26d"/>
<circle cx="186.5" cy="452.7" r="1.75" fill="#eab839"/>
<circle cx="191.8" cy="359.7" r="1.75" fill="#7eb26d"/>
<circle cx="191.8" cy="452.7" r="1.75" fill="#eab839"/>
<circle cx="197.8" cy="360" r="0.6" fill="#7eb26d"/>
<circle cx="197.8" cy="452.7" r="0.6" fill="#eab839"/>
<circle cx="203.2" cy="360" r="0.6" fill="#7eb26d"/>
<circle cx="203.2" cy="452.7" r="0.6" fill="#eab839"/>
<circle cx="209" cy="360" r="1.75" fill="#7eb26d"/>
<circle cx="209" cy="452.7" r="1.75" fill="#eab839"/>
<circle cx="214.5" cy="360" r="1.75" fill="#7eb26d"/>
<circle cx="214.5" cy="452.7" r="1.75" fill="#eab839"/>
<circle cx="371.6" cy="376.1" r="1.75" fill="#7eb26d"/>
<circle cx="371.6" cy="452.7" r="1.75" fill="#eab839"/>
<circle cx="377" cy="359.1" r="1.75" fill="#7eb26d"/>
<circle cx="377" cy="452.7" r="1.75" fill="#eab839"/>
<circle cx="383" cy="359.6" r="0.6" fill="#7eb26d"/>
<circle cx="383" cy="452.7" r="0.6" fill="#eab839"/>
<circle cx="388.8" cy="360.3" r="1.75" fill="#7eb26d"/>
<circle cx="388.8" cy="452.7" r="1.75" fill="#eab839"/>
<circle cx="394.4" cy="359.6" r="1.75" fill="#7eb26d"/>
<circle cx="394.4" cy="452.7" r="1.75" fill="#eab839"/>
<circle cx="399.6" cy="359.1" r="1.75" fill="#7eb26d"/>
<circle cx="399.6" cy="452.7" r="1.75" fill="#eab839"/>
<circle cx="404.9" cy="359.6" r="1.75" fill="#7eb26d"/>
<circle cx="404.9" cy="452.7" r="1.75" fill="#eab839"/>
<circle cx="410.4" cy="360.3" r="1.75" fill="#7eb26d"/>
<circle cx="410.4" cy="452.7" r="1.75" fill="#eab839"/>
<circle cx="415.9" cy="360.3" r="1.75" fill="#7eb26d"/>
<circle cx="415.9" cy="452.7" r="1.75" fill="#eab839"/>
<circle cx="421.6" cy="360.3" r="0.6" fill="#7eb26d"/>
<circle cx="421.6" cy="452.7" r="0.6" fill="#eab839"/>
<circle cx="427.1" cy="360.3" r="0.6" fill="#7eb26d"/>
<circle cx="427.1" cy="452.7" r="0.6" fill="#eab839"/>
<circle cx="577.4" cy="374.5" r="1.75" fill="#7eb26d"/>
<circle cx="577.4" cy="452.7" r="1.75" fill="#eab839"/>
<circle cx="582.7" cy="360.5" r="1.75" fill="#7eb26d"/>
<circle cx="582.7" cy="452.7" r="1.75" fill="#eab839"/>
<circle cx="588.1" cy="359.6" r="1.75" fill="#7eb26d"/>
<circle cx="588.1" cy="452.7" r="1.75" fill="#eab839"/>
<circle cx="593.5" cy="359.1" r="1.75" fill="#7eb26d"/>
<circle cx="593.5" cy="452.7" r="1.75" fill="#eab839"/>
<circle cx="599" cy="358.8" r="1.75" fill="#7eb26d"/>
<circle cx="599" cy="452.7" r="1.75" fill="#eab839"/>
<circle cx="604.4" cy="359.1" r="1.75" fill="#7eb26d"/>
<circle cx="604.4" cy="452.7" r="1.75" fill="#eab839"/>
<circle cx="611" cy="358.8" r="1.75" fill="#7eb26d"/>
<circle cx="611" cy="452.7" r="1.75" fill="#eab839"/>
<circle cx="828.4" cy="374.1" r="1.75" fill="#7eb26d"/>
<circle cx="828.4" cy="452.7" r="1.75" fill="#eab839"/>
<circle cx="834.4" cy="360.5" r="0.6" fill="#7eb26d"/>
<circle cx="834.4" cy="452.7" r="0.6" fill="#eab839"/>
<circle cx="839.7" cy="360.5" r="0.6" fill="#7eb26d"/>
<circle cx="839.7" cy="452.7" r="0.6" fill="#eab839"/>
<circle cx="845.5" cy="358.8" r="1.75" fill="#7eb26d"/>
<circle cx="845.5" cy="452.7" r="1.75" fill="#eab839"/>
<circle cx="851" cy="358.6" r="1.75" fill="#7eb26d"/>
<circle cx="851" cy="452.7" r="1.75" fill="#eab839"/>
<circle cx="856.4" cy="359.6" r="1.75" fill="#7eb26d"/>
<circle cx="856.4" cy="452.7" r="1.75" fill="#eab839"/>
<circle cx="861.7" cy="360.3" r="1.75" fill="#7eb26d"/>
<circle cx="861.7" cy="452.7" r="1.75" fill="#eab839"/>
<circle cx="867.2" cy="360.5" r="1.75" fill="#7eb26d"/>
<circle cx="867.2" cy="452.7" r="1.75" fill="#eab839"/>
<circle cx="872.5" cy="360.5" r="1.75" fill="#7eb26d"/>
<circle cx="872.5" cy="452.7" r="1.75" fill="#eab839"/>
<circle cx="878.8" cy="360.5" r="0.6" fill="#7eb26d"/>
<circle cx="878.8" cy="452.7" r="0.6" fill="#eab839"/>
<path d="M63.4 459.6 L74.4 459.6 L68.9 454.1 Z" fill="#19b9dc"/>
<rect x="21.7" y="540" width="876" height="26" fill="#1a1c20"/>
<rect x="36.3" y="525.1" width="11" height="2" fill="#7eb26d"/>
<text x="58.3" y="530.3" font-size="13.2" fill="#c7d0d9">8_<tspan dy="0.9" class="c">生成订单信息</tspan></text>
<rect x="36.3" y="552.6" width="11" height="2" fill="#eab839"/>
<text x="58.3" y="557.6" font-size="13.2" fill="#c7d0d9">all</text>
<text x="796.5" y="506" text-anchor="end" class="h" font-size="13.1" fill="#33a2e5">max</text>
<text x="886" y="506" text-anchor="end" class="h" font-size="13.1" fill="#33a2e5">avg</text>
<text x="796.5" y="530.3" text-anchor="end" font-size="13.2" fill="#c7d0d9">52.08 s</text>
<text x="886" y="530.3" text-anchor="end" font-size="13.2" fill="#c7d0d9">4.45 s</text>
<text x="796.5" y="557.6" text-anchor="end" font-size="13.2" fill="#c7d0d9">1.29 s</text>
<text x="886" y="557.6" text-anchor="end" font-size="13.2" fill="#c7d0d9">195.76 ms</text>
<text x="1364.5" y="315.6" text-anchor="middle" class="t" font-size="15.5" fill="#cfd5dc">Transactions Response Times (95th pct)</text>
<rect x="981.3" y="345.1" width="819.1" height="98.27" fill="rgba(234,112,112,0.12)"/>
<line x1="981.3" y1="452.3" x2="1800.4" y2="452.3" stroke="rgba(200,200,200,0.22)" stroke-width="1"/>
<line x1="981.3" y1="416.57" x2="1800.4" y2="416.57" stroke="rgba(200,200,200,0.22)" stroke-width="1"/>
<line x1="981.3" y1="380.83" x2="1800.4" y2="380.83" stroke="rgba(200,200,200,0.22)" stroke-width="1"/>
<line x1="981.3" y1="345.1" x2="1800.4" y2="345.1" stroke="rgba(200,200,200,0.22)" stroke-width="1"/>
<line x1="1044.5" y1="345.1" x2="1044.5" y2="452.3" stroke="rgba(200,200,200,0.22)" stroke-width="1"/>
<line x1="1109.08" y1="345.1" x2="1109.08" y2="452.3" stroke="rgba(200,200,200,0.22)" stroke-width="1"/>
<line x1="1173.66" y1="345.1" x2="1173.66" y2="452.3" stroke="rgba(200,200,200,0.22)" stroke-width="1"/>
<line x1="1238.24" y1="345.1" x2="1238.24" y2="452.3" stroke="rgba(200,200,200,0.22)" stroke-width="1"/>
<line x1="1302.82" y1="345.1" x2="1302.82" y2="452.3" stroke="rgba(200,200,200,0.22)" stroke-width="1"/>
<line x1="1367.4" y1="345.1" x2="1367.4" y2="452.3" stroke="rgba(200,200,200,0.22)" stroke-width="1"/>
<line x1="1431.98" y1="345.1" x2="1431.98" y2="452.3" stroke="rgba(200,200,200,0.22)" stroke-width="1"/>
<line x1="1496.56" y1="345.1" x2="1496.56" y2="452.3" stroke="rgba(200,200,200,0.22)" stroke-width="1"/>
<line x1="1561.14" y1="345.1" x2="1561.14" y2="452.3" stroke="rgba(200,200,200,0.22)" stroke-width="1"/>
<line x1="1625.72" y1="345.1" x2="1625.72" y2="452.3" stroke="rgba(200,200,200,0.22)" stroke-width="1"/>
<line x1="1690.3" y1="345.1" x2="1690.3" y2="452.3" stroke="rgba(200,200,200,0.22)" stroke-width="1"/>
<line x1="1754.88" y1="345.1" x2="1754.88" y2="452.3" stroke="rgba(200,200,200,0.22)" stroke-width="1"/>
<text x="975.5" y="456.9" text-anchor="end" font-size="13.2" fill="#c7d0d9">0 ms</text>
<text x="975.5" y="421.07" text-anchor="end" font-size="13.2" fill="#c7d0d9">20 s</text>
<text x="975.5" y="385.23" text-anchor="end" font-size="13.2" fill="#c7d0d9">40 s</text>
<text x="975.5" y="348.7" text-anchor="end" font-size="13.2" fill="#c7d0d9">1.0 min</text>
<text x="1044.5" y="479.9" text-anchor="middle" font-size="13.2" fill="#c7d0d9">00:00</text>
<text x="1109.08" y="479.9" text-anchor="middle" font-size="13.2" fill="#c7d0d9">00:10</text>
<text x="1173.66" y="479.9" text-anchor="middle" font-size="13.2" fill="#c7d0d9">00:20</text>
<text x="1238.24" y="479.9" text-anchor="middle" font-size="13.2" fill="#c7d0d9">00:30</text>
<text x="1302.82" y="479.9" text-anchor="middle" font-size="13.2" fill="#c7d0d9">00:40</text>
<text x="1367.4" y="479.9" text-anchor="middle" font-size="13.2" fill="#c7d0d9">00:50</text>
<text x="1431.98" y="479.9" text-anchor="middle" font-size="13.2" fill="#c7d0d9">01:00</text>
<text x="1496.56" y="479.9" text-anchor="middle" font-size="13.2" fill="#c7d0d9">01:10</text>
<text x="1561.14" y="479.9" text-anchor="middle" font-size="13.2" fill="#c7d0d9">01:20</text>
<text x="1625.72" y="479.9" text-anchor="middle" font-size="13.2" fill="#c7d0d9">01:30</text>
<text x="1690.3" y="479.9" text-anchor="middle" font-size="13.2" fill="#c7d0d9">01:40</text>
<text x="1754.88" y="479.9" text-anchor="middle" font-size="13.2" fill="#c7d0d9">01:50</text>
<line x1="984" y1="345.1" x2="984" y2="449.7" stroke="#127c98" stroke-width="2" stroke-dasharray="2.6,2.3"/>
<line x1="981.3" y1="443.37" x2="1800.4" y2="443.37" stroke="rgba(237,46,24,0.65)" stroke-width="2"/>
<line x1="981.3" y1="449.92" x2="1800.4" y2="449.92" stroke="rgba(247,149,32,0.65)" stroke-width="2"/>
<line x1="981.3" y1="451.75" x2="1800.4" y2="451.75" stroke="rgba(6,163,69,0.75)" stroke-width="1.8"/>
<line x1="1112.8" y1="358.4" x2="1112.8" y2="452.3" stroke="#eab839" stroke-width="0.8" opacity="0.22"/>
<line x1="1118.2" y1="358.4" x2="1118.2" y2="452.3" stroke="#eab839" stroke-width="0.8" opacity="0.22"/>
<line x1="1298" y1="358" x2="1298" y2="452.3" stroke="#eab839" stroke-width="0.8" opacity="0.22"/>
<line x1="1336.6" y1="358.7" x2="1336.6" y2="452.3" stroke="#eab839" stroke-width="0.8" opacity="0.22"/>
<line x1="1342.1" y1="358.7" x2="1342.1" y2="452.3" stroke="#eab839" stroke-width="0.8" opacity="0.22"/>
<line x1="1749.4" y1="358.9" x2="1749.4" y2="452.3" stroke="#eab839" stroke-width="0.8" opacity="0.22"/>
<line x1="1754.7" y1="358.9" x2="1754.7" y2="452.3" stroke="#eab839" stroke-width="0.8" opacity="0.22"/>
<line x1="1793.8" y1="358.9" x2="1793.8" y2="452.3" stroke="#eab839" stroke-width="0.8" opacity="0.22"/>
<path d="M1145.1 452.3 L1146.5 433.4 L1147.9 452.3" fill="#7eb26d" fill-opacity="0.3" stroke="#7eb26d" stroke-width="1" stroke-linejoin="round"/>
<path d="M1160 452.3 L1161.4 433.4 L1162.8 452.3" fill="#7eb26d" fill-opacity="0.3" stroke="#7eb26d" stroke-width="1" stroke-linejoin="round"/>
<path d="M1172 452.3 L1173.4 434 L1174.8 452.3" fill="#7eb26d" fill-opacity="0.3" stroke="#7eb26d" stroke-width="1" stroke-linejoin="round"/>
<path d="M1182.9 452.3 L1184.3 434 L1185.7 452.3" fill="#7eb26d" fill-opacity="0.3" stroke="#7eb26d" stroke-width="1" stroke-linejoin="round"/>
<path d="M1193.7 452.3 L1195.1 434.5 L1196.5 452.3" fill="#7eb26d" fill-opacity="0.3" stroke="#7eb26d" stroke-width="1" stroke-linejoin="round"/>
<path d="M1196.7 452.3 L1198.1 434.8 L1199.5 452.3" fill="#7eb26d" fill-opacity="0.3" stroke="#7eb26d" stroke-width="1" stroke-linejoin="round"/>
<path d="M1200 452.3 L1201.4 434.8 L1202.8 452.3" fill="#7eb26d" fill-opacity="0.3" stroke="#7eb26d" stroke-width="1" stroke-linejoin="round"/>
<path d="M1244.1 452.3 L1245.5 434.8 L1246.9 452.3" fill="#7eb26d" fill-opacity="0.3" stroke="#7eb26d" stroke-width="1" stroke-linejoin="round"/>
<path d="M1248.6 452.3 L1250 435.8 L1251.4 452.3" fill="#7eb26d" fill-opacity="0.3" stroke="#7eb26d" stroke-width="1" stroke-linejoin="round"/>
<path d="M1370.1 452.3 L1371.5 432.8 L1372.9 452.3" fill="#7eb26d" fill-opacity="0.3" stroke="#7eb26d" stroke-width="1" stroke-linejoin="round"/>
<path d="M1419.8 452.3 L1421.2 433.3 L1422.6 452.3" fill="#7eb26d" fill-opacity="0.3" stroke="#7eb26d" stroke-width="1" stroke-linejoin="round"/>
<path d="M1435.9 452.3 L1437.3 433.3 L1438.7 452.3" fill="#7eb26d" fill-opacity="0.3" stroke="#7eb26d" stroke-width="1" stroke-linejoin="round"/>
<path d="M1465 452.3 L1466.4 434 L1467.8 452.3" fill="#7eb26d" fill-opacity="0.3" stroke="#7eb26d" stroke-width="1" stroke-linejoin="round"/>
<path d="M1477 452.3 L1478.4 434.5 L1479.8 452.3" fill="#7eb26d" fill-opacity="0.3" stroke="#7eb26d" stroke-width="1" stroke-linejoin="round"/>
<path d="M1539.2 452.3 L1540.6 432.8 L1542 452.3" fill="#7eb26d" fill-opacity="0.3" stroke="#7eb26d" stroke-width="1" stroke-linejoin="round"/>
<path d="M1540.6 452.3 L1542 432.8 L1543.4 452.3" fill="#7eb26d" fill-opacity="0.3" stroke="#7eb26d" stroke-width="1" stroke-linejoin="round"/>
<path d="M1541.9 452.3 L1543.3 432.8 L1544.7 452.3" fill="#7eb26d" fill-opacity="0.3" stroke="#7eb26d" stroke-width="1" stroke-linejoin="round"/>
<path d="M1546 452.3 L1547.4 433.3 L1548.8 452.3" fill="#7eb26d" fill-opacity="0.3" stroke="#7eb26d" stroke-width="1" stroke-linejoin="round"/>
<path d="M1622.6 452.3 L1624 432.8 L1625.4 452.3" fill="#7eb26d" fill-opacity="0.3" stroke="#7eb26d" stroke-width="1" stroke-linejoin="round"/>
<path d="M1627.6 452.3 L1629 432.8 L1630.4 452.3" fill="#7eb26d" fill-opacity="0.3" stroke="#7eb26d" stroke-width="1" stroke-linejoin="round"/>
<path d="M1707.6 452.3 L1709 434 L1710.4 452.3" fill="#7eb26d" fill-opacity="0.3" stroke="#7eb26d" stroke-width="1" stroke-linejoin="round"/>
<path d="M1347.6 358.4 L1349.3 452.3" stroke="#eab839" stroke-width="1.1" fill="none"/>
<path d="M1531 357.7 L1532.7 452.3" stroke="#eab839" stroke-width="1.1" fill="none"/>
<path d="M984 452.6 L985.8 452.6 L987.6 452.6 L989.4 452.6 L991.2 452.6 L993 452.6 L994.8 452.6 L996.6 452.6 L998.4 452.6 L1000.2 452.6 L1002 452.6 L1003.8 452.6 L1005.6 452.6 L1007.4 452.6 L1009.2 452.6 L1011 452.6 L1012.8 452.6 L1014.6 452.6 L1016.4 452.6 L1018.2 452.6 L1020 452.6 L1021.8 452.6 L1023.6 452.6 L1025.4 452.6 L1027.2 452.6 L1029 452.6 L1030.8 452.6 L1032.6 452.6 L1034.4 452.6 L1036.2 452.6 L1038 452.6 L1039.8 452.6 L1041.6 452.6 L1043.4 452.6 L1045.2 452.6 L1047 452.6 L1048.8 452.6 L1050.6 452.6 L1052.4 452.6 L1054.2 452.6 L1056 452.6 L1057.8 452.6 L1059.6 452.6 L1061.4 452.6 L1063.2 452.6 L1065 452.6 L1066.8 452.6 L1068.6 452.6 L1070.4 452.6 L1072.2 452.6 L1074 452.6 L1075.8 452.6 L1077.6 452.6 L1079.4 452.6 L1081.2 452.6 L1083 452.6 L1084.8 452.6 L1086.5 452.6" stroke="#eab839" stroke-width="1.1" fill="none"/>
<path d="M1132.5 452.6 L1134.3 452.6 L1136.1 452.6 L1137.9 452.6 L1139.7 452.6 L1141.5 452.6 L1143.3 452.6 L1145.1 452.6 L1146.9 452.6 L1148.7 452.6 L1150.5 452.6 L1152.3 452.6 L1154.1 452.6 L1155.9 452.6 L1157.7 452.6 L1159.5 452.6 L1161.3 452.6 L1163.1 452.6 L1164.9 452.6 L1166.7 452.6 L1168.5 452.6 L1170.3 452.6 L1172.1 452.6 L1173.9 452.6 L1175.7 452.6 L1177.5 452.6 L1179.3 452.6 L1181.1 452.6 L1182.9 452.6 L1184.7 452.6 L1186.5 452.6 L1188.3 452.6 L1190.1 452.6 L1191.9 452.6 L1193.7 452.6 L1195.5 452.6 L1197.3 452.6 L1199.1 452.6 L1200.9 452.6 L1202.7 452.6 L1204.5 452.6 L1206.3 452.6 L1208.1 452.6 L1209.9 452.6 L1211.7 452.6 L1213.5 452.6 L1215.3 452.6 L1217.1 452.6 L1218.9 452.6 L1220.7 452.6 L1222.5 452.6 L1224.3 452.6 L1226.1 452.6 L1227.9 452.6 L1229.7 452.6 L1231.5 452.6 L1233.3 452.6 L1235.1 452.6 L1236.9 452.6 L1238.7 452.6 L1240.5 452.6 L1242.3 452.6 L1244.1 452.6 L1245.9 452.6 L1247.7 452.6 L1249.5 452.6 L1251.3 452.6 L1253.1 452.6 L1254.9 452.6 L1256.7 452.6 L1258.5 452.6 L1260.3 452.6 L1262.1 452.6 L1263.9 452.6 L1265.7 452.6 L1267.5 452.6 L1269.3 452.6 L1271.1 452.6 L1272.9 452.6 L1274.7 452.6 L1276.5 452.6 L1278.3 452.6 L1280.1 452.6 L1281.9 452.6 L1282.5 452.6" stroke="#eab839" stroke-width="1.1" fill="none"/>
<path d="M1349.3 452.6 L1351.1 452.6 L1352.9 452.6 L1354.7 452.6 L1356.5 452.6 L1358.3 452.6 L1360.1 452.6 L1361.9 452.6 L1363.7 452.6 L1365.5 452.6 L1367.3 452.6 L1369.1 452.6 L1370.9 452.6 L1372.7 452.6 L1374.5 452.6 L1376.3 452.6 L1378.1 452.6 L1379.9 452.6 L1381.7 452.6 L1383.5 452.6 L1385.3 452.6 L1387.1 452.6 L1388.9 452.6 L1390.7 452.6 L1392.5 452.6 L1394.3 452.6 L1396.1 452.6 L1397.9 452.6 L1399.7 452.6 L1401.5 452.6 L1403.3 452.6 L1405.1 452.6 L1406.9 452.6 L1408.7 452.6 L1410.5 452.6 L1412.3 452.6 L1414.1 452.6 L1415.9 452.6 L1417.7 452.6 L1419.5 452.6 L1421.3 452.6 L1423.1 452.6 L1424.9 452.6 L1426.7 452.6 L1428.5 452.6 L1430.3 452.6 L1432.1 452.6 L1433.9 452.6 L1435.7 452.6 L1437.5 452.6 L1439.3 452.6 L1441.1 452.6 L1442.9 452.6 L1444.7 452.6 L1446.5 452.6 L1448.3 452.6 L1450.1 452.6 L1451.9 452.6 L1453.7 452.6 L1455.5 452.6 L1457.3 452.6 L1459.1 452.6 L1460.9 452.6 L1462.7 452.6 L1464.5 452.6 L1466.3 452.6 L1468.1 452.6 L1469.9 452.6 L1471.7 452.6 L1473.5 452.6 L1475.3 452.6 L1477.1 452.6 L1478.9 452.6 L1480.7 452.6 L1482.5 452.6 L1484.3 452.6 L1486.1 452.6 L1487.9 452.6 L1488 452.6" stroke="#eab839" stroke-width="1.1" fill="none"/>
<path d="M1532.7 452.6 L1534.5 452.6 L1536.3 452.6 L1538.1 452.6 L1539.9 452.6 L1541.7 452.6 L1543.5 452.6 L1545.3 452.6 L1547.1 452.6 L1548.9 452.6 L1550.7 452.6 L1552.5 452.6 L1554.3 452.6 L1556.1 452.6 L1557.9 452.6 L1559.7 452.6 L1561.5 452.6 L1563.3 452.6 L1565.1 452.6 L1566.9 452.6 L1568.7 452.6 L1570.5 452.6 L1572.3 452.6 L1574.1 452.6 L1575.9 452.6 L1577.7 452.6 L1579.5 452.6 L1581.3 452.6 L1583.1 452.6 L1584.9 452.6 L1586.7 452.6 L1588.5 452.6 L1590.3 452.6 L1592.1 452.6 L1593.9 452.6 L1595.7 452.6 L1597.5 452.6 L1599.3 452.6 L1601.1 452.6 L1602.9 452.6 L1604.7 452.6 L1606.5 452.6 L1608.3 452.6 L1610.1 452.6 L1611.9 452.6 L1613.7 452.6 L1615.5 452.6 L1617.3 452.1 L1619.1 451.7 L1620.9 452.3 L1622.7 452.6 L1624.5 452.1 L1626.3 452.6 L1628.1 452.6 L1629.9 452.6 L1631.7 452.3 L1633.5 452.6 L1635.3 452.3 L1637.1 452.6 L1638.9 451.7 L1640.7 452.6 L1642.5 451.7 L1644.3 452.6 L1646.1 452.6 L1647.9 452.6 L1649.7 452.6 L1651.5 451.7 L1653.3 452.6 L1655.1 452.3 L1656.9 452.6 L1658.7 452.6 L1660.5 451.7 L1662.3 451.7 L1664.1 452.6 L1665.9 452.6 L1667.7 452.1 L1669.5 451.7 L1671.3 452.3 L1673.1 452.6 L1674.9 452.1 L1676.7 452.6 L1678.5 452.1 L1680.3 452.1 L1682.1 452.1 L1683.9 452.1 L1685.7 452.6 L1687.5 452.6 L1689.3 452.6 L1691.1 452.6 L1692.9 452.6 L1694.7 452.6 L1696.5 452.3 L1698.3 452.6 L1700.1 452.6 L1701.9 452.1 L1703.7 452.1 L1705.5 452.3 L1707.3 452.6 L1709.1 452.3 L1710.9 452.6 L1712.7 452.6 L1714.5 451.7 L1716.3 452.1 L1718.1 452.6 L1719.9 452.6 L1721.7 451.7 L1723.5 452.6 L1725.3 451.7 L1727.1 452.3 L1728.9 452.6 L1730.7 452.6 L1732.5 451.7 L1734.3 452.6 L1736.1 452.6 L1737.9 452.3 L1738 452.6" stroke="#eab839" stroke-width="1.1" fill="none"/>
<circle cx="1090.4" cy="358.4" r="1.75" fill="#eab839"/>
<circle cx="1096" cy="358.4" r="1.75" fill="#eab839"/>
<circle cx="1101.5" cy="358.4" r="1.75" fill="#eab839"/>
<circle cx="1106.8" cy="358.1" r="1.75" fill="#eab839"/>
<circle cx="1112.8" cy="358.4" r="0.6" fill="#eab839"/>
<circle cx="1118.2" cy="358.4" r="0.6" fill="#eab839"/>
<circle cx="1124" cy="358.4" r="1.75" fill="#eab839"/>
<circle cx="1129.5" cy="358.4" r="1.75" fill="#eab839"/>
<circle cx="1286.6" cy="358.4" r="1.75" fill="#eab839"/>
<circle cx="1292" cy="357.5" r="1.75" fill="#eab839"/>
<circle cx="1298" cy="358" r="0.6" fill="#eab839"/>
<circle cx="1303.8" cy="358.7" r="1.75" fill="#eab839"/>
<circle cx="1309.4" cy="358" r="1.75" fill="#eab839"/>
<circle cx="1314.6" cy="357.5" r="1.75" fill="#eab839"/>
<circle cx="1319.9" cy="358" r="1.75" fill="#eab839"/>
<circle cx="1325.4" cy="358.7" r="1.75" fill="#eab839"/>
<circle cx="1330.9" cy="358.7" r="1.75" fill="#eab839"/>
<circle cx="1336.6" cy="358.7" r="0.6" fill="#eab839"/>
<circle cx="1342.1" cy="358.7" r="0.6" fill="#eab839"/>
<circle cx="1492.4" cy="358.4" r="1.75" fill="#eab839"/>
<circle cx="1497.7" cy="358.9" r="1.75" fill="#eab839"/>
<circle cx="1503.1" cy="358" r="1.75" fill="#eab839"/>
<circle cx="1508.5" cy="357.5" r="1.75" fill="#eab839"/>
<circle cx="1514" cy="357.2" r="1.75" fill="#eab839"/>
<circle cx="1519.4" cy="357.5" r="1.75" fill="#eab839"/>
<circle cx="1526" cy="357.2" r="1.75" fill="#eab839"/>
<circle cx="1743.4" cy="358.4" r="1.75" fill="#eab839"/>
<circle cx="1749.4" cy="358.9" r="0.6" fill="#eab839"/>
<circle cx="1754.7" cy="358.9" r="0.6" fill="#eab839"/>
<circle cx="1760.5" cy="357.2" r="1.75" fill="#eab839"/>
<circle cx="1766" cy="357" r="1.75" fill="#eab839"/>
<circle cx="1771.4" cy="358" r="1.75" fill="#eab839"/>
<circle cx="1776.7" cy="358.7" r="1.75" fill="#eab839"/>
<circle cx="1782.2" cy="358.9" r="1.75" fill="#eab839"/>
<circle cx="1787.5" cy="358.9" r="1.75" fill="#eab839"/>
<circle cx="1793.8" cy="358.9" r="0.6" fill="#eab839"/>
<path d="M978.4 459.6 L989.4 459.6 L983.9 454.1 Z" fill="#19b9dc"/>
<rect x="936.7" y="540" width="876" height="26" fill="#1a1c20"/>
<rect x="951.3" y="525.1" width="11" height="2" fill="#7eb26d"/>
<text x="973.3" y="530.3" font-size="13.2" fill="#c7d0d9">8_<tspan dy="0.9" class="c">生成订单信息</tspan></text>
<rect x="951.3" y="552.6" width="11" height="2" fill="#eab839"/>
<text x="973.3" y="557.6" font-size="13.2" fill="#c7d0d9">all</text>
<text x="1738" y="506" text-anchor="end" class="h" font-size="13.1" fill="#33a2e5">max</text>
<text x="1801" y="506" text-anchor="end" class="h" font-size="13.1" fill="#33a2e5">avg</text>
<text x="1738" y="530.3" text-anchor="end" font-size="13.2" fill="#c7d0d9">52.65 s</text>
<text x="1801" y="530.3" text-anchor="end" font-size="13.2" fill="#c7d0d9">4.72 s</text>
<text x="1738" y="557.6" text-anchor="end" font-size="13.2" fill="#c7d0d9">52.65 s</text>
<text x="1801" y="557.6" text-anchor="end" font-size="13.2" fill="#c7d0d9">4.38 s</text>
<text x="449.3" y="607.1" text-anchor="middle" class="t" font-size="15.5" fill="#cfd5dc">Total Errors</text>
<path d="M496.3 600.8 L499.6 604.1 L502.9 600.8" fill="none" stroke="#8d939b" stroke-width="1.2"/>
<line x1="45.3" y1="729.4" x2="885.2" y2="729.4" stroke="rgba(200,200,200,0.22)" stroke-width="1"/>
<line x1="45.3" y1="706.17" x2="885.2" y2="706.17" stroke="rgba(200,200,200,0.22)" stroke-width="1"/>
<line x1="45.3" y1="682.95" x2="885.2" y2="682.95" stroke="rgba(200,200,200,0.22)" stroke-width="1"/>
<line x1="45.3" y1="659.73" x2="885.2" y2="659.73" stroke="rgba(200,200,200,0.22)" stroke-width="1"/>
<line x1="45.3" y1="636.5" x2="885.2" y2="636.5" stroke="rgba(200,200,200,0.22)" stroke-width="1"/>
<line x1="110.6" y1="636.5" x2="110.6" y2="729.4" stroke="rgba(200,200,200,0.22)" stroke-width="1"/>
<line x1="176.8" y1="636.5" x2="176.8" y2="729.4" stroke="rgba(200,200,200,0.22)" stroke-width="1"/>
<line x1="243" y1="636.5" x2="243" y2="729.4" stroke="rgba(200,200,200,0.22)" stroke-width="1"/>
<line x1="309.2" y1="636.5" x2="309.2" y2="729.4" stroke="rgba(200,200,200,0.22)" stroke-width="1"/>
<line x1="375.4" y1="636.5" x2="375.4" y2="729.4" stroke="rgba(200,200,200,0.22)" stroke-width="1"/>
<line x1="441.6" y1="636.5" x2="441.6" y2="729.4" stroke="rgba(200,200,200,0.22)" stroke-width="1"/>
<line x1="507.8" y1="636.5" x2="507.8" y2="729.4" stroke="rgba(200,200,200,0.22)" stroke-width="1"/>
<line x1="574" y1="636.5" x2="574" y2="729.4" stroke="rgba(200,200,200,0.22)" stroke-width="1"/>
<line x1="640.2" y1="636.5" x2="640.2" y2="729.4" stroke="rgba(200,200,200,0.22)" stroke-width="1"/>
<line x1="706.4" y1="636.5" x2="706.4" y2="729.4" stroke="rgba(200,200,200,0.22)" stroke-width="1"/>
<line x1="772.6" y1="636.5" x2="772.6" y2="729.4" stroke="rgba(200,200,200,0.22)" stroke-width="1"/>
<line x1="838.8" y1="636.5" x2="838.8" y2="729.4" stroke="rgba(200,200,200,0.22)" stroke-width="1"/>
<text x="39.7" y="732.8" text-anchor="end" font-size="13.2" fill="#c7d0d9">0</text>
<text x="39.7" y="709.57" text-anchor="end" font-size="13.2" fill="#c7d0d9">25</text>
<text x="39.7" y="686.35" text-anchor="end" font-size="13.2" fill="#c7d0d9">50</text>
<text x="39.7" y="663.12" text-anchor="end" font-size="13.2" fill="#c7d0d9">75</text>
<text x="39.7" y="639.9" text-anchor="end" font-size="13.2" fill="#c7d0d9">100</text>
<text x="110.6" y="757" text-anchor="middle" font-size="13.2" fill="#c7d0d9">00:00</text>
<text x="176.8" y="757" text-anchor="middle" font-size="13.2" fill="#c7d0d9">00:10</text>
<text x="243" y="757" text-anchor="middle" font-size="13.2" fill="#c7d0d9">00:20</text>
<text x="309.2" y="757" text-anchor="middle" font-size="13.2" fill="#c7d0d9">00:30</text>
<text x="375.4" y="757" text-anchor="middle" font-size="13.2" fill="#c7d0d9">00:40</text>
<text x="441.6" y="757" text-anchor="middle" font-size="13.2" fill="#c7d0d9">00:50</text>
<text x="507.8" y="757" text-anchor="middle" font-size="13.2" fill="#c7d0d9">01:00</text>
<text x="574" y="757" text-anchor="middle" font-size="13.2" fill="#c7d0d9">01:10</text>
<text x="640.2" y="757" text-anchor="middle" font-size="13.2" fill="#c7d0d9">01:20</text>
<text x="706.4" y="757" text-anchor="middle" font-size="13.2" fill="#c7d0d9">01:30</text>
<text x="772.6" y="757" text-anchor="middle" font-size="13.2" fill="#c7d0d9">01:40</text>
<text x="838.8" y="757" text-anchor="middle" font-size="13.2" fill="#c7d0d9">01:50</text>
<path d="M48.4 729.4 L98.8 729.4 L100 728.6 L101.2 729.4 L151.8 729.4" stroke="#bf1b00" stroke-width="1.5" fill="#bf1b00" fill-opacity="0.5" stroke-linejoin="round"/>
<path d="M202 729.4 L213.9 729.4 L215.1 726.2 L216.3 729.4 L229.4 729.4 L230.6 728.6 L231.8 729.4 L241.4 729.4 L242.6 725.2 L243.8 729.4 L252.3 729.4 L253.5 728.5 L254.7 729.4 L263.5 729.4 L264.7 728.6 L265.9 729.4 L266.8 729.4 L268 728.6 L269.2 729.4 L270.1 729.4 L271.3 728.6 L272.5 729.4 L315.4 729.4 L316.6 728.6 L317.8 729.4 L319.6 729.4 L320.8 725.6 L322 729.4 L353 729.4" stroke="#bf1b00" stroke-width="1.5" fill="#bf1b00" fill-opacity="0.5" stroke-linejoin="round"/>
<path d="M422.7 729.4 L444.8 729.4 L446 728.6 L447.2 729.4 L495.6 729.4 L496.8 726 L498 729.4 L512.2 729.4 L513.4 728.6 L514.6 729.4 L541.8 729.4 L543 724.8 L544.2 729.4 L554 729.4 L555.2 728.5 L556.4 729.4 L564.7 729.4" stroke="#bf1b00" stroke-width="1.5" fill="#bf1b00" fill-opacity="0.5" stroke-linejoin="round"/>
<path d="M716 729.4 L790.2 729.4 L791.4 728.4 L792.6 729.4 L821.4 729.4" stroke="#bf1b00" stroke-width="1.5" fill="#bf1b00" fill-opacity="0.5" stroke-linejoin="round"/>
<path d="M179.5 678 L180.6 705.5 L180.7 729.4" stroke="#bf1b00" stroke-width="1.1" fill="none" stroke-linejoin="round"/>
<path d="M186.5 679 L185.3 705 L186 729.4" stroke="#bf1b00" stroke-width="1.1" fill="none" stroke-linejoin="round"/>
<path d="M370 691.3 L370.6 729.4" stroke="#bf1b00" stroke-width="1.1" fill="none" stroke-linejoin="round"/>
<path d="M410.7 682 L409.4 701.6 L409.9 701.6 L410.4 729.4" stroke="#bf1b00" stroke-width="1.1" fill="none" stroke-linejoin="round"/>
<path d="M416.2 665.3 L415.2 665.8 L414.9 718.2 L415.6 718 L416.4 665.5 L416 729.4" stroke="#bf1b00" stroke-width="0.9" fill="none" stroke-linejoin="round"/>
<path d="M421.5 664.2 L420.2 718.2 L420.9 718 L421.9 664.2 L422.7 729.4" stroke="#bf1b00" stroke-width="1.1" fill="none" stroke-linejoin="round"/>
<path d="M609.5 654.6 L610.3 729.4" stroke="#bf1b00" stroke-width="1.1" fill="none" stroke-linejoin="round"/>
<path d="M832.5 655.8 L833.6 729.4" stroke="#bf1b00" stroke-width="1.1" fill="none" stroke-linejoin="round"/>
<path d="M839.2 657.5 L838.4 729.4" stroke="#bf1b00" stroke-width="1.1" fill="none" stroke-linejoin="round"/>
<path d="M879.2 670.3 L877.6 713.2 L878.3 729.4" stroke="#bf1b00" stroke-width="1.1" fill="none" stroke-linejoin="round"/>
<path d="M883.4 729.4 L885 729.4" stroke="#bf1b00" stroke-width="1.5" fill="none" stroke-linejoin="round"/>
<rect x="156" y="653.3" width="2.6" height="2.6" rx="0.8" fill="#bf1b00"/>
<rect x="161.8" y="653.3" width="2.6" height="2.6" rx="0.8" fill="#bf1b00"/>
<rect x="167.3" y="653.3" width="2.6" height="2.6" rx="0.8" fill="#bf1b00"/>
<rect x="173" y="653.3" width="2.6" height="2.6" rx="0.8" fill="#bf1b00"/>
<rect x="190.5" y="653.3" width="2.6" height="2.6" rx="0.8" fill="#bf1b00"/>
<rect x="196" y="653.3" width="2.6" height="2.6" rx="0.8" fill="#bf1b00"/>
<rect x="357" y="653.3" width="2.6" height="2.6" rx="0.8" fill="#bf1b00"/>
<rect x="362.8" y="653.3" width="2.6" height="2.6" rx="0.8" fill="#bf1b00"/>
<rect x="374.9" y="653.3" width="2.6" height="2.6" rx="0.8" fill="#bf1b00"/>
<rect x="380.6" y="653.3" width="2.6" height="2.6" rx="0.8" fill="#bf1b00"/>
<rect x="386.1" y="653.3" width="2.6" height="2.6" rx="0.8" fill="#bf1b00"/>
<rect x="391.6" y="653.3" width="2.6" height="2.6" rx="0.8" fill="#bf1b00"/>
<rect x="397.3" y="653.3" width="2.6" height="2.6" rx="0.8" fill="#bf1b00"/>
<rect x="403.1" y="653.3" width="2.6" height="2.6" rx="0.8" fill="#bf1b00"/>
<rect x="567.9" y="653.3" width="2.6" height="2.6" rx="0.8" fill="#bf1b00"/>
<rect x="573.4" y="653.3" width="2.6" height="2.6" rx="0.8" fill="#bf1b00"/>
<rect x="579.2" y="653.3" width="2.6" height="2.6" rx="0.8" fill="#bf1b00"/>
<rect x="584.7" y="653.3" width="2.6" height="2.6" rx="0.8" fill="#bf1b00"/>
<rect x="590.4" y="653.3" width="2.6" height="2.6" rx="0.8" fill="#bf1b00"/>
<rect x="595.9" y="653.3" width="2.6" height="2.6" rx="0.8" fill="#bf1b00"/>
<rect x="602.4" y="653.3" width="2.6" height="2.6" rx="0.8" fill="#bf1b00"/>
<rect x="825.6" y="653.3" width="2.6" height="2.6" rx="0.8" fill="#bf1b00"/>
<rect x="843.1" y="653.3" width="2.6" height="2.6" rx="0.8" fill="#bf1b00"/>
<rect x="848.9" y="653.3" width="2.6" height="2.6" rx="0.8" fill="#bf1b00"/>
<rect x="854.6" y="653.3" width="2.6" height="2.6" rx="0.8" fill="#bf1b00"/>
<rect x="860.1" y="653.3" width="2.6" height="2.6" rx="0.8" fill="#bf1b00"/>
<rect x="865.6" y="653.3" width="2.6" height="2.6" rx="0.8" fill="#bf1b00"/>
<rect x="871.2" y="653.3" width="2.6" height="2.6" rx="0.8" fill="#bf1b00"/>
<line x1="48.4" y1="636.5" x2="48.4" y2="729.4" stroke="#00c8f0" stroke-width="1.2" stroke-dasharray="2.6,2.2" opacity="0.85"/>
<path d="M42.8 736.7 L53.8 736.7 L48.3 731.2 Z" fill="#19b9dc"/>
<line x1="643.8" y1="636.5" x2="643.8" y2="729.4" stroke="rgba(170,0,0,0.80)" stroke-width="1.2"/>
<rect x="36.3" y="801" width="11" height="2" fill="#bf1b00"/>
<text x="58.3" y="806.5" font-size="13.2" fill="#c7d0d9">Num of Errors</text>
<text x="886" y="782.5" text-anchor="end" class="h" font-size="13.1" fill="#33a2e5">total</text>
<text x="886" y="806.5" text-anchor="end" font-size="13.2" fill="#c7d0d9">3 K</text>
<path d="M904.5 822 L909 822 L909 817.5" fill="none" stroke="#5a5d62" stroke-width="1.2"/>
<rect x="566.5" y="709.5" width="149" height="59" rx="3" fill="#141414"/>
<text x="579.5" y="730.7" class="b bg" font-size="13.35" fill="#d8d9da">2021-02-06 01:04:40</text>
<rect x="580.3" y="746.6" width="9.8" height="3" fill="#bf1b00"/>
<text x="593.3" y="753.2" class="b bw" font-size="13.1" fill="#ffffff">Num of Errors:</text>
<text x="705.1" y="753.2" text-anchor="end" class="b bw" font-size="13.1" fill="#ffffff">0</text>
<text x="1364.5" y="607.1" text-anchor="middle" class="t" font-size="15.5" fill="#cfd5dc">Network Traffic</text>
<rect x="971.5" y="636.5" width="508.1" height="146.9" fill="rgba(234,112,112,0.12)"/>
<line x1="971.5" y1="783.4" x2="1479.6" y2="783.4" stroke="rgba(200,200,200,0.22)" stroke-width="1"/>
<line x1="971.5" y1="734.43" x2="1479.6" y2="734.43" stroke="rgba(200,200,200,0.22)" stroke-width="1"/>
<line x1="971.5" y1="685.47" x2="1479.6" y2="685.47" stroke="rgba(200,200,200,0.22)" stroke-width="1"/>
<line x1="971.5" y1="636.5" x2="1479.6" y2="636.5" stroke="rgba(200,200,200,0.22)" stroke-width="1"/>
<line x1="1010.5" y1="636.5" x2="1010.5" y2="783.4" stroke="rgba(200,200,200,0.22)" stroke-width="1"/>
<line x1="1130.9" y1="636.5" x2="1130.9" y2="783.4" stroke="rgba(200,200,200,0.22)" stroke-width="1"/>
<line x1="1251.3" y1="636.5" x2="1251.3" y2="783.4" stroke="rgba(200,200,200,0.22)" stroke-width="1"/>
<line x1="1371.7" y1="636.5" x2="1371.7" y2="783.4" stroke="rgba(200,200,200,0.22)" stroke-width="1"/>
<text x="965.2" y="787.1" text-anchor="end" font-size="13.2" fill="#c7d0d9">0 B</text>
<text x="965.2" y="738.13" text-anchor="end" font-size="13.2" fill="#c7d0d9">2 MiB</text>
<text x="965.2" y="689.17" text-anchor="end" font-size="13.2" fill="#c7d0d9">4 MiB</text>
<text x="965.2" y="640.2" text-anchor="end" font-size="13.2" fill="#c7d0d9">6 MiB</text>
<text x="1010.5" y="810.3" text-anchor="middle" font-size="13.2" fill="#c7d0d9">00:00</text>
<text x="1130.9" y="810.3" text-anchor="middle" font-size="13.2" fill="#c7d0d9">00:30</text>
<text x="1251.3" y="810.3" text-anchor="middle" font-size="13.2" fill="#c7d0d9">01:00</text>
<text x="1371.7" y="810.3" text-anchor="middle" font-size="13.2" fill="#c7d0d9">01:30</text>
<path d="M973.28 778.18 L973.28 775.46 L974.81 767.3 L976.86 758.22 L978.91 748.24 L980.96 738.26 L981.99 732.82 L982.5 733.73 L984.03 723.75 L985.57 712.86 L986.6 713.77 L987.62 706.51 L988.34 711.95 L989.67 704.69 L990.69 701.97 L991.21 704.69 L992.74 693.81 L993.46 692.9 L994.08 712.86 L994.79 693.81 L995.82 691.99 L996.54 694.71 L997.35 687.45 L998.17 683.83 L998.89 685.64 L999.92 682.37 L1000.74 683.46 L1001.45 679.29 L1002.27 681.65 L1003.5 676.93 L1004.53 679.29 L1005.35 686.55 L1006.06 673.85 L1007.09 672.03 L1007.81 672.94 L1008.63 670.76 L1009.45 672.03 L1010.16 668.04 L1010.68 725.56 L1011.9 686.55 L1012.72 686 L1013.75 688.36 L1014.77 686.55 L1015.8 683.83 L1016.82 687.45 L1018.05 683.83 L1018.87 694.71 L1019.69 714.67 L1019.9 736.45 L1020.72 727.38 L1021.43 725.56 L1021.95 713.77 L1022.46 733.73 L1023.18 712.86 L1024 714.67 L1024.51 725.56 L1025.02 712.86 L1026.04 715.58 L1027.07 712.86 L1027.89 721.93 L1028.71 740.98 L1029.43 717.4 L1030.14 732.82 L1030.76 738.26 L1031.37 710.14 L1032.19 717.4 L1033.01 720.12 L1033.73 723.75 L1034.45 727.38 L1035.47 708.87 L1036.09 758.22 L1036.09 783.4 L973.28 783.4 Z" fill="#6ed0e0" fill-opacity="0.1"/>
<path d="M973.28 778.18 L973.28 775.46 L974.81 767.3 L976.86 758.22 L978.91 748.24 L980.96 738.26 L981.99 732.82 L982.5 733.73 L984.03 723.75 L985.57 712.86 L986.6 713.77 L987.62 706.51 L988.34 711.95 L989.67 704.69 L990.69 701.97 L991.21 704.69 L992.74 693.81 L993.46 692.9 L994.08 712.86 L994.79 693.81 L995.82 691.99 L996.54 694.71 L997.35 687.45 L998.17 683.83 L998.89 685.64 L999.92 682.37 L1000.74 683.46 L1001.45 679.29 L1002.27 681.65 L1003.5 676.93 L1004.53 679.29 L1005.35 686.55 L1006.06 673.85 L1007.09 672.03 L1007.81 672.94 L1008.63 670.76 L1009.45 672.03 L1010.16 668.04 L1010.68 725.56 L1011.9 686.55 L1012.72 686 L1013.75 688.36 L1014.77 686.55 L1015.8 683.83 L1016.82 687.45 L1018.05 683.83 L1018.87 694.71 L1019.69 714.67 L1019.9 736.45 L1020.72 727.38 L1021.43 725.56 L1021.95 713.77 L1022.46 733.73 L1023.18 712.86 L1024 714.67 L1024.51 725.56 L1025.02 712.86 L1026.04 715.58 L1027.07 712.86 L1027.89 721.93 L1028.71 740.98 L1029.43 717.4 L1030.14 732.82 L1030.76 738.26 L1031.37 710.14 L1032.19 717.4 L1033.01 720.12 L1033.73 723.75 L1034.45 727.38 L1035.47 708.87 L1036.09 758.22 L1036.09 783.4 L973.28 783.4 Z" fill="#ef843c" fill-opacity="0.1"/>
<path d="M1066.01 727.38 L1066.83 704.69 L1067.54 707.41 L1068.57 718.3 L1069.59 729.19 L1070.1 733.73 L1070.72 743.71 L1071.33 729.19 L1072.15 726.47 L1072.67 721.93 L1073.18 671.12 L1073.9 662.05 L1074.51 673.85 L1075.23 672.03 L1076.25 662.05 L1077.28 656.97 L1078.3 659.33 L1078.81 676.57 L1079.33 682.92 L1080.15 667.49 L1080.86 663.87 L1081.58 662.05 L1082.4 659.33 L1083.22 665.68 L1083.94 678.38 L1084.65 660.24 L1085.47 662.05 L1086.29 664.77 L1086.7 672.94 L1087.32 663.87 L1088.04 662.05 L1089.06 658.42 L1090.08 662.05 L1090.8 671.12 L1091.42 701.97 L1092.13 720.12 L1092.65 725.56 L1093.47 718.3 L1094.18 725.56 L1095.21 729.19 L1096.23 730.1 L1097.26 729.19 L1097.97 731.91 L1098.79 728.28 L1099.31 725.56 L1099.82 694.71 L1100.54 662.96 L1101.36 680.2 L1102.07 662.96 L1102.89 667.49 L1103.71 663.87 L1104.43 672.94 L1105.15 660.24 L1105.97 671.12 L1106.79 664.77 L1107.5 660.24 L1108.32 670.22 L1109.04 672.94 L1109.55 678.38 L1110.27 694.71 L1110.88 669.31 L1111.6 662.05 L1112.63 658.06 L1113.65 663.87 L1114.68 662.05 L1115.39 672.94 L1116.01 654.43 L1116.73 660.24 L1117.75 658.42 L1118.77 656.97 L1119.8 657.51 L1120.82 656.24 L1121.54 667.49 L1122.36 660.24 L1123.18 658.42 L1123.9 670.22 L1124.92 662.05 L1125.95 660.24 L1126.97 658.42 L1128 660.24 L1129.02 656.61 L1129.74 656.24 L1130.56 669.31 L1131.58 671.12 L1132.61 673.85 L1133.43 676.57 L1134.14 672.58 L1134.66 687.45 L1135.17 705.6 L1135.68 727.38 L1136.19 720.12 L1136.91 733.73 L1137.53 708.32 L1138.24 711.04 L1138.96 713.77 L1139.78 711.04 L1140.6 721.93 L1141.32 727.38 L1142.03 714.67 L1142.85 709.23 L1143.67 721.93 L1144.39 732.82 L1144.9 711.04 L1145.62 714.67 L1146.34 701.97 L1146.95 712.86 L1147.77 714.67 L1148.49 732.82 L1149.21 734.63 L1150.03 725.56 L1150.85 717.4 L1151.56 729.19 L1152.28 740.08 L1153.1 736.45 L1153.92 727.38 L1154.64 724.65 L1155.35 729.19 L1156.17 729.19 L1156.99 738.26 L1157.71 752.78 L1157.71 783.4 L1066.01 783.4 Z" fill="#6ed0e0" fill-opacity="0.1"/>
<path d="M1066.01 727.38 L1066.83 704.69 L1067.54 707.41 L1068.57 718.3 L1069.59 729.19 L1070.1 733.73 L1070.72 743.71 L1071.33 729.19 L1072.15 726.47 L1072.67 721.93 L1073.18 671.12 L1073.9 662.05 L1074.51 673.85 L1075.23 672.03 L1076.25 662.05 L1077.28 656.97 L1078.3 659.33 L1078.81 676.57 L1079.33 682.92 L1080.15 667.49 L1080.86 663.87 L1081.58 662.05 L1082.4 659.33 L1083.22 665.68 L1083.94 678.38 L1084.65 660.24 L1085.47 662.05 L1086.29 664.77 L1086.7 672.94 L1087.32 663.87 L1088.04 662.05 L1089.06 658.42 L1090.08 662.05 L1090.8 671.12 L1091.42 701.97 L1092.13 720.12 L1092.65 725.56 L1093.47 718.3 L1094.18 725.56 L1095.21 729.19 L1096.23 730.1 L1097.26 729.19 L1097.97 731.91 L1098.79 728.28 L1099.31 725.56 L1099.82 694.71 L1100.54 662.96 L1101.36 680.2 L1102.07 662.96 L1102.89 667.49 L1103.71 663.87 L1104.43 672.94 L1105.15 660.24 L1105.97 671.12 L1106.79 664.77 L1107.5 660.24 L1108.32 670.22 L1109.04 672.94 L1109.55 678.38 L1110.27 694.71 L1110.88 669.31 L1111.6 662.05 L1112.63 658.06 L1113.65 663.87 L1114.68 662.05 L1115.39 672.94 L1116.01 654.43 L1116.73 660.24 L1117.75 658.42 L1118.77 656.97 L1119.8 657.51 L1120.82 656.24 L1121.54 667.49 L1122.36 660.24 L1123.18 658.42 L1123.9 670.22 L1124.92 662.05 L1125.95 660.24 L1126.97 658.42 L1128 660.24 L1129.02 656.61 L1129.74 656.24 L1130.56 669.31 L1131.58 671.12 L1132.61 673.85 L1133.43 676.57 L1134.14 672.58 L1134.66 687.45 L1135.17 705.6 L1135.68 727.38 L1136.19 720.12 L1136.91 733.73 L1137.53 708.32 L1138.24 711.04 L1138.96 713.77 L1139.78 711.04 L1140.6 721.93 L1141.32 727.38 L1142.03 714.67 L1142.85 709.23 L1143.67 721.93 L1144.39 732.82 L1144.9 711.04 L1145.62 714.67 L1146.34 701.97 L1146.95 712.86 L1147.77 714.67 L1148.49 732.82 L1149.21 734.63 L1150.03 725.56 L1150.85 717.4 L1151.56 729.19 L1152.28 740.08 L1153.1 736.45 L1153.92 727.38 L1154.64 724.65 L1155.35 729.19 L1156.17 729.19 L1156.99 738.26 L1157.71 752.78 L1157.71 783.4 L1066.01 783.4 Z" fill="#ef843c" fill-opacity="0.1"/>
<path d="M1198.4 783.63 L1199.22 765.48 L1199.93 734.63 L1200.44 726.47 L1201.26 731 L1201.98 733.73 L1203.01 730.1 L1203.72 728.28 L1204.54 731 L1205.57 729.55 L1206.39 730.64 L1207.1 727.01 L1207.82 731.91 L1208.64 732.82 L1209.15 721.93 L1209.67 689.27 L1210.18 666.59 L1210.69 674.75 L1211.41 663.87 L1212.23 661.69 L1212.95 663.87 L1213.76 676.57 L1214.58 662.05 L1215.3 659.33 L1216.33 660.24 L1217.35 662.05 L1218.07 662.96 L1218.89 658.06 L1219.91 656.97 L1220.63 658.42 L1221.14 678.38 L1221.76 694.71 L1222.47 714.67 L1222.99 723.75 L1223.5 724.65 L1224.01 731 L1224.52 734.27 L1225.55 731 L1226.57 729.55 L1227.29 728.83 L1227.9 730.1 L1228.42 711.04 L1228.93 680.2 L1229.24 664.77 L1229.65 689.27 L1230.16 721.93 L1230.88 730.64 L1231.7 723.75 L1232.72 722.84 L1233.23 714.67 L1233.75 702.88 L1234.46 696.53 L1235.28 692.9 L1236.1 678.38 L1236.82 667.49 L1237.33 660.24 L1237.84 674.75 L1238.56 656.24 L1239.38 659.33 L1240.2 657.51 L1240.92 659.33 L1241.64 661.14 L1242.45 657.51 L1243.27 658.42 L1243.99 656.61 L1244.71 660.24 L1245.32 664.77 L1246.04 658.42 L1246.76 658.06 L1247.37 663.87 L1247.78 676.57 L1248.4 658.42 L1249.11 658.06 L1250.14 658.42 L1250.86 658.06 L1251.37 671.12 L1251.88 675.66 L1252.5 672.94 L1253.21 675.66 L1253.73 673.3 L1254.24 678.38 L1254.75 683.83 L1255.06 747.34 L1255.57 707.41 L1256.08 673.85 L1256.59 672.94 L1257 707.41 L1257.41 752.78 L1257.82 770.02 L1258.23 773.65 L1258.85 767.3 L1259.67 752.78 L1260.39 749.15 L1261.1 741.89 L1261.92 732.82 L1262.74 726.47 L1263.46 725.2 L1264.18 731 L1265 738.26 L1265.71 729.19 L1266.53 731 L1267.25 734.63 L1268.07 738.26 L1268.89 739.17 L1269.61 737.36 L1270.33 733.73 L1271.14 731 L1271.96 728.28 L1272.48 752.78 L1272.99 753.69 L1273.4 732.82 L1274.22 736.45 L1275.04 729.19 L1275.76 721.93 L1276.47 720.12 L1277.29 729.19 L1277.8 734.63 L1278.52 730.1 L1279.34 729.19 L1280.16 725.56 L1280.88 727.38 L1281.6 729.19 L1282.42 725.56 L1283.24 723.38 L1283.95 725.56 L1284.47 736.45 L1284.98 761.85 L1285.49 780 L1285.49 783.4 L1198.4 783.4 Z" fill="#6ed0e0" fill-opacity="0.1"/>
<path d="M1198.4 783.63 L1199.22 765.48 L1199.93 734.63 L1200.44 726.47 L1201.26 731 L1201.98 733.73 L1203.01 730.1 L1203.72 728.28 L1204.54 731 L1205.57 729.55 L1206.39 730.64 L1207.1 727.01 L1207.82 731.91 L1208.64 732.82 L1209.15 721.93 L1209.67 689.27 L1210.18 666.59 L1210.69 674.75 L1211.41 663.87 L1212.23 661.69 L1212.95 663.87 L1213.76 676.57 L1214.58 662.05 L1215.3 659.33 L1216.33 660.24 L1217.35 662.05 L1218.07 662.96 L1218.89 658.06 L1219.91 656.97 L1220.63 658.42 L1221.14 678.38 L1221.76 694.71 L1222.47 714.67 L1222.99 723.75 L1223.5 724.65 L1224.01 731 L1224.52 734.27 L1225.55 731 L1226.57 729.55 L1227.29 728.83 L1227.9 730.1 L1228.42 711.04 L1228.93 680.2 L1229.24 664.77 L1229.65 689.27 L1230.16 721.93 L1230.88 730.64 L1231.7 723.75 L1232.72 722.84 L1233.23 714.67 L1233.75 702.88 L1234.46 696.53 L1235.28 692.9 L1236.1 678.38 L1236.82 667.49 L1237.33 660.24 L1237.84 674.75 L1238.56 656.24 L1239.38 659.33 L1240.2 657.51 L1240.92 659.33 L1241.64 661.14 L1242.45 657.51 L1243.27 658.42 L1243.99 656.61 L1244.71 660.24 L1245.32 664.77 L1246.04 658.42 L1246.76 658.06 L1247.37 663.87 L1247.78 676.57 L1248.4 658.42 L1249.11 658.06 L1250.14 658.42 L1250.86 658.06 L1251.37 671.12 L1251.88 675.66 L1252.5 672.94 L1253.21 675.66 L1253.73 673.3 L1254.24 678.38 L1254.75 683.83 L1255.06 747.34 L1255.57 707.41 L1256.08 673.85 L1256.59 672.94 L1257 707.41 L1257.41 752.78 L1257.82 770.02 L1258.23 773.65 L1258.85 767.3 L1259.67 752.78 L1260.39 749.15 L1261.1 741.89 L1261.92 732.82 L1262.74 726.47 L1263.46 725.2 L1264.18 731 L1265 738.26 L1265.71 729.19 L1266.53 731 L1267.25 734.63 L1268.07 738.26 L1268.89 739.17 L1269.61 737.36 L1270.33 733.73 L1271.14 731 L1271.96 728.28 L1272.48 752.78 L1272.99 753.69 L1273.4 732.82 L1274.22 736.45 L1275.04 729.19 L1275.76 721.93 L1276.47 720.12 L1277.29 729.19 L1277.8 734.63 L1278.52 730.1 L1279.34 729.19 L1280.16 725.56 L1280.88 727.38 L1281.6 729.19 L1282.42 725.56 L1283.24 723.38 L1283.95 725.56 L1284.47 736.45 L1284.98 761.85 L1285.49 780 L1285.49 783.4 L1198.4 783.4 Z" fill="#ef843c" fill-opacity="0.1"/>
<path d="M1312.61 781.81 L1313.13 729.19 L1313.84 723.75 L1314.66 719.21 L1315.38 714.67 L1316.2 721.93 L1316.92 722.84 L1317.63 707.41 L1318.04 694.71 L1318.66 693.81 L1319.27 682.01 L1319.79 670.22 L1320.5 669.31 L1321.32 666.04 L1322.14 665.32 L1322.55 676.57 L1323.06 689.27 L1323.58 692.9 L1323.99 755.5 L1324.4 716.49 L1324.81 680.2 L1325.22 707.41 L1325.63 740.08 L1326.04 754.59 L1326.45 736.45 L1326.86 707.41 L1327.27 692.9 L1327.68 693.26 L1328.19 709.23 L1328.7 709.59 L1329.21 720.12 L1329.72 732.82 L1330.24 740.98 L1330.75 739.17 L1331.36 743.71 L1331.98 736.45 L1332.8 732.82 L1333.62 731.91 L1334.34 733.73 L1335.16 730.1 L1335.87 733.73 L1336.69 741.89 L1337.41 732.82 L1338.13 728.28 L1338.95 727.38 L1339.66 721.93 L1340.18 719.75 L1340.79 729.19 L1341.51 728.83 L1342.23 731 L1343.05 733.73 L1343.76 740.98 L1344.58 732.82 L1345.3 728.28 L1345.91 720.12 L1346.63 703.79 L1347.35 687.45 L1348.17 675.66 L1348.99 680.2 L1349.71 687.45 L1350.42 688.36 L1351.04 666.59 L1351.55 676.57 L1352.06 667.49 L1352.78 666.59 L1353.5 659.33 L1354.11 658.06 L1354.83 654.79 L1355.55 658.06 L1356.37 657.51 L1356.98 658.42 L1357.39 676.57 L1357.9 703.79 L1358.41 732.82 L1358.93 739.17 L1359.44 729.19 L1360.26 728.83 L1360.98 728.28 L1361.69 730.1 L1362.51 727.38 L1363.33 728.28 L1364.05 728.83 L1364.77 730.1 L1365.59 731 L1366.3 732.82 L1367.12 729.19 L1367.84 730.1 L1368.66 728.83 L1369.38 730.1 L1370.2 729.19 L1370.92 728.83 L1371.53 732.82 L1372.25 735.54 L1372.96 736.45 L1373.48 758.22 L1373.99 769.11 L1374.3 771.83 L1374.81 760.04 L1375.32 754.59 L1375.83 752.78 L1376.35 736.45 L1376.96 719.75 L1377.47 743.71 L1377.88 748.24 L1378.4 738.26 L1378.91 727.38 L1379.42 736.45 L1379.93 740.98 L1380.44 730.1 L1380.96 736.45 L1381.57 740.98 L1382.19 741.89 L1382.8 736.45 L1383.52 731.91 L1384.03 738.26 L1384.65 732.82 L1385.26 730.1 L1385.87 732.82 L1386.59 729.55 L1387.31 732.82 L1387.92 731 L1388.54 741.89 L1389.15 742.8 L1389.87 745.52 L1390.49 740.08 L1391 732.82 L1391.72 734.63 L1392.33 733.73 L1392.94 741.89 L1393.56 753.69 L1394.17 742.8 L1394.79 743.71 L1395.51 741.89 L1396.12 736.45 L1396.84 732.82 L1397.35 741.89 L1397.86 748.24 L1398.38 745.52 L1398.99 750.96 L1399.61 737.36 L1400.22 738.26 L1400.94 740.08 L1401.65 741.89 L1402.27 743.71 L1402.99 740.08 L1403.5 738.26 L1404.11 754.59 L1404.73 747.34 L1405.34 745.52 L1406.06 737.36 L1406.78 743.71 L1407.39 736.45 L1408.11 732.82 L1408.62 731.91 L1409.24 738.26 L1409.85 741.89 L1410.47 732.82 L1410.98 722.29 L1411.49 748.24 L1412 736.45 L1412.52 727.38 L1413.03 743.71 L1413.54 738.26 L1414.26 733.73 L1414.77 741.89 L1415.38 744.61 L1416 741.89 L1416.61 740.08 L1417.33 739.17 L1417.84 738.26 L1418.36 748.24 L1418.87 729.19 L1419.69 730.1 L1420.41 728.28 L1420.92 740.08 L1421.43 728.28 L1422.15 729.19 L1422.76 727.74 L1423.27 733.73 L1423.79 728.28 L1424.5 732.82 L1425.02 725.2 L1425.63 732.82 L1426.25 743.71 L1426.86 733.73 L1427.58 735.54 L1428.29 733.73 L1428.91 741.89 L1429.63 742.8 L1430.34 741.89 L1430.96 732.82 L1431.68 722.84 L1432.39 729.19 L1433.01 736.45 L1433.73 740.08 L1434.24 733.73 L1434.85 738.26 L1435.47 736.45 L1436.08 737.36 L1436.59 747.34 L1437.11 733.73 L1437.62 721.57 L1438.13 727.38 L1438.64 733.73 L1439.16 735.54 L1439.77 730.1 L1440.39 740.08 L1440.9 745.52 L1441.21 747.34 L1441.21 783.4 L1312.61 783.4 Z" fill="#6ed0e0" fill-opacity="0.1"/>
<path d="M1312.61 781.81 L1313.13 729.19 L1313.84 723.75 L1314.66 719.21 L1315.38 714.67 L1316.2 721.93 L1316.92 722.84 L1317.63 707.41 L1318.04 694.71 L1318.66 693.81 L1319.27 682.01 L1319.79 670.22 L1320.5 669.31 L1321.32 666.04 L1322.14 665.32 L1322.55 676.57 L1323.06 689.27 L1323.58 692.9 L1323.99 755.5 L1324.4 716.49 L1324.81 680.2 L1325.22 707.41 L1325.63 740.08 L1326.04 754.59 L1326.45 736.45 L1326.86 707.41 L1327.27 692.9 L1327.68 693.26 L1328.19 709.23 L1328.7 709.59 L1329.21 720.12 L1329.72 732.82 L1330.24 740.98 L1330.75 739.17 L1331.36 743.71 L1331.98 736.45 L1332.8 732.82 L1333.62 731.91 L1334.34 733.73 L1335.16 730.1 L1335.87 733.73 L1336.69 741.89 L1337.41 732.82 L1338.13 728.28 L1338.95 727.38 L1339.66 721.93 L1340.18 719.75 L1340.79 729.19 L1341.51 728.83 L1342.23 731 L1343.05 733.73 L1343.76 740.98 L1344.58 732.82 L1345.3 728.28 L1345.91 720.12 L1346.63 703.79 L1347.35 687.45 L1348.17 675.66 L1348.99 680.2 L1349.71 687.45 L1350.42 688.36 L1351.04 666.59 L1351.55 676.57 L1352.06 667.49 L1352.78 666.59 L1353.5 659.33 L1354.11 658.06 L1354.83 654.79 L1355.55 658.06 L1356.37 657.51 L1356.98 658.42 L1357.39 676.57 L1357.9 703.79 L1358.41 732.82 L1358.93 739.17 L1359.44 729.19 L1360.26 728.83 L1360.98 728.28 L1361.69 730.1 L1362.51 727.38 L1363.33 728.28 L1364.05 728.83 L1364.77 730.1 L1365.59 731 L1366.3 732.82 L1367.12 729.19 L1367.84 730.1 L1368.66 728.83 L1369.38 730.1 L1370.2 729.19 L1370.92 728.83 L1371.53 732.82 L1372.25 735.54 L1372.96 736.45 L1373.48 758.22 L1373.99 769.11 L1374.3 771.83 L1374.81 760.04 L1375.32 754.59 L1375.83 752.78 L1376.35 736.45 L1376.96 719.75 L1377.47 743.71 L1377.88 748.24 L1378.4 738.26 L1378.91 727.38 L1379.42 736.45 L1379.93 740.98 L1380.44 730.1 L1380.96 736.45 L1381.57 740.98 L1382.19 741.89 L1382.8 736.45 L1383.52 731.91 L1384.03 738.26 L1384.65 732.82 L1385.26 730.1 L1385.87 732.82 L1386.59 729.55 L1387.31 732.82 L1387.92 731 L1388.54 741.89 L1389.15 742.8 L1389.87 745.52 L1390.49 740.08 L1391 732.82 L1391.72 734.63 L1392.33 733.73 L1392.94 741.89 L1393.56 753.69 L1394.17 742.8 L1394.79 743.71 L1395.51 741.89 L1396.12 736.45 L1396.84 732.82 L1397.35 741.89 L1397.86 748.24 L1398.38 745.52 L1398.99 750.96 L1399.61 737.36 L1400.22 738.26 L1400.94 740.08 L1401.65 741.89 L1402.27 743.71 L1402.99 740.08 L1403.5 738.26 L1404.11 754.59 L1404.73 747.34 L1405.34 745.52 L1406.06 737.36 L1406.78 743.71 L1407.39 736.45 L1408.11 732.82 L1408.62 731.91 L1409.24 738.26 L1409.85 741.89 L1410.47 732.82 L1410.98 722.29 L1411.49 748.24 L1412 736.45 L1412.52 727.38 L1413.03 743.71 L1413.54 738.26 L1414.26 733.73 L1414.77 741.89 L1415.38 744.61 L1416 741.89 L1416.61 740.08 L1417.33 739.17 L1417.84 738.26 L1418.36 748.24 L1418.87 729.19 L1419.69 730.1 L1420.41 728.28 L1420.92 740.08 L1421.43 728.28 L1422.15 729.19 L1422.76 727.74 L1423.27 733.73 L1423.79 728.28 L1424.5 732.82 L1425.02 725.2 L1425.63 732.82 L1426.25 743.71 L1426.86 733.73 L1427.58 735.54 L1428.29 733.73 L1428.91 741.89 L1429.63 742.8 L1430.34 741.89 L1430.96 732.82 L1431.68 722.84 L1432.39 729.19 L1433.01 736.45 L1433.73 740.08 L1434.24 733.73 L1434.85 738.26 L1435.47 736.45 L1436.08 737.36 L1436.59 747.34 L1437.11 733.73 L1437.62 721.57 L1438.13 727.38 L1438.64 733.73 L1439.16 735.54 L1439.77 730.1 L1440.39 740.08 L1440.9 745.52 L1441.21 747.34 L1441.21 783.4 L1312.61 783.4 Z" fill="#ef843c" fill-opacity="0.1"/>
<path d="M1478.5 713.77 L1478.91 703.79 L1479.32 699.25 L1479.32 783.4 L1478.5 783.4 Z" fill="#6ed0e0" fill-opacity="0.1"/>
<path d="M1478.5 713.77 L1478.91 703.79 L1479.32 699.25 L1479.32 783.4 L1478.5 783.4 Z" fill="#ef843c" fill-opacity="0.1"/>
<path d="M973.28 779.75 L973.28 777.84 L974.81 772.13 L976.86 765.78 L978.91 758.79 L980.96 751.8 L981.99 747.99 L982.5 748.63 L984.03 741.64 L985.57 734.02 L986.6 734.66 L987.62 729.58 L988.34 733.39 L989.67 728.31 L990.69 726.4 L991.21 728.31 L992.74 720.68 L993.46 720.05 L994.08 734.02 L994.79 720.68 L995.82 719.41 L996.54 721.32 L997.35 716.24 L998.17 713.7 L998.89 714.97 L999.92 712.68 L1000.74 713.44 L1001.45 710.52 L1002.27 712.17 L1003.5 708.87 L1004.53 710.52 L1005.35 715.6 L1006.06 706.71 L1007.09 705.44 L1007.81 706.08 L1008.63 704.55 L1009.45 705.44 L1010.16 702.65 L1010.68 742.91 L1011.9 715.6 L1012.72 715.22 L1013.75 716.87 L1014.77 715.6 L1015.8 713.7 L1016.82 716.24 L1018.05 713.7 L1018.87 721.32 L1019.69 735.29 L1019.9 750.53 L1020.72 744.18 L1021.43 742.91 L1021.95 734.66 L1022.46 748.63 L1023.18 734.02 L1024 735.29 L1024.51 742.91 L1025.02 734.02 L1026.04 735.93 L1027.07 734.02 L1027.89 740.37 L1028.71 753.71 L1029.43 737.2 L1030.14 747.99 L1030.76 751.8 L1031.37 732.12 L1032.19 737.2 L1033.01 739.1 L1033.73 741.64 L1034.45 744.18 L1035.47 731.23 L1036.09 765.78 L1036.09 783.4 L973.28 783.4 Z" fill="#7eb26d" fill-opacity="0.1"/>
<path d="M973.28 779.75 L973.28 777.84 L974.81 772.13 L976.86 765.78 L978.91 758.79 L980.96 751.8 L981.99 747.99 L982.5 748.63 L984.03 741.64 L985.57 734.02 L986.6 734.66 L987.62 729.58 L988.34 733.39 L989.67 728.31 L990.69 726.4 L991.21 728.31 L992.74 720.68 L993.46 720.05 L994.08 734.02 L994.79 720.68 L995.82 719.41 L996.54 721.32 L997.35 716.24 L998.17 713.7 L998.89 714.97 L999.92 712.68 L1000.74 713.44 L1001.45 710.52 L1002.27 712.17 L1003.5 708.87 L1004.53 710.52 L1005.35 715.6 L1006.06 706.71 L1007.09 705.44 L1007.81 706.08 L1008.63 704.55 L1009.45 705.44 L1010.16 702.65 L1010.68 742.91 L1011.9 715.6 L1012.72 715.22 L1013.75 716.87 L1014.77 715.6 L1015.8 713.7 L1016.82 716.24 L1018.05 713.7 L1018.87 721.32 L1019.69 735.29 L1019.9 750.53 L1020.72 744.18 L1021.43 742.91 L1021.95 734.66 L1022.46 748.63 L1023.18 734.02 L1024 735.29 L1024.51 742.91 L1025.02 734.02 L1026.04 735.93 L1027.07 734.02 L1027.89 740.37 L1028.71 753.71 L1029.43 737.2 L1030.14 747.99 L1030.76 751.8 L1031.37 732.12 L1032.19 737.2 L1033.01 739.1 L1033.73 741.64 L1034.45 744.18 L1035.47 731.23 L1036.09 765.78 L1036.09 783.4 L973.28 783.4 Z" fill="#eab839" fill-opacity="0.1"/>
<path d="M1066.01 744.18 L1066.83 728.31 L1067.54 730.21 L1068.57 737.83 L1069.59 745.45 L1070.1 748.63 L1070.72 755.61 L1071.33 745.45 L1072.15 743.55 L1072.67 740.37 L1073.18 704.81 L1073.9 698.46 L1074.51 706.71 L1075.23 705.44 L1076.25 698.46 L1077.28 694.9 L1078.3 696.55 L1078.81 708.62 L1079.33 713.06 L1080.15 702.27 L1080.86 699.73 L1081.58 698.46 L1082.4 696.55 L1083.22 701 L1083.94 709.89 L1084.65 697.19 L1085.47 698.46 L1086.29 700.36 L1086.7 706.08 L1087.32 699.73 L1088.04 698.46 L1089.06 695.92 L1090.08 698.46 L1090.8 704.81 L1091.42 726.4 L1092.13 739.1 L1092.65 742.91 L1093.47 737.83 L1094.18 742.91 L1095.21 745.45 L1096.23 746.09 L1097.26 745.45 L1097.97 747.36 L1098.79 744.82 L1099.31 742.91 L1099.82 721.32 L1100.54 699.09 L1101.36 711.16 L1102.07 699.09 L1102.89 702.27 L1103.71 699.73 L1104.43 706.08 L1105.15 697.19 L1105.97 704.81 L1106.79 700.36 L1107.5 697.19 L1108.32 704.17 L1109.04 706.08 L1109.55 709.89 L1110.27 721.32 L1110.88 703.54 L1111.6 698.46 L1112.63 695.66 L1113.65 699.73 L1114.68 698.46 L1115.39 706.08 L1116.01 693.12 L1116.73 697.19 L1117.75 695.92 L1118.77 694.9 L1119.8 695.28 L1120.82 694.39 L1121.54 702.27 L1122.36 697.19 L1123.18 695.92 L1123.9 704.17 L1124.92 698.46 L1125.95 697.19 L1126.97 695.92 L1128 697.19 L1129.02 694.65 L1129.74 694.39 L1130.56 703.54 L1131.58 704.81 L1132.61 706.71 L1133.43 708.62 L1134.14 705.82 L1134.66 716.24 L1135.17 728.94 L1135.68 744.18 L1136.19 739.1 L1136.91 748.63 L1137.53 730.85 L1138.24 732.75 L1138.96 734.66 L1139.78 732.75 L1140.6 740.37 L1141.32 744.18 L1142.03 735.29 L1142.85 731.48 L1143.67 740.37 L1144.39 747.99 L1144.9 732.75 L1145.62 735.29 L1146.34 726.4 L1146.95 734.02 L1147.77 735.29 L1148.49 747.99 L1149.21 749.26 L1150.03 742.91 L1150.85 737.2 L1151.56 745.45 L1152.28 753.07 L1153.1 750.53 L1153.92 744.18 L1154.64 742.28 L1155.35 745.45 L1156.17 745.45 L1156.99 751.8 L1157.71 761.97 L1157.71 783.4 L1066.01 783.4 Z" fill="#7eb26d" fill-opacity="0.1"/>
<path d="M1066.01 744.18 L1066.83 728.31 L1067.54 730.21 L1068.57 737.83 L1069.59 745.45 L1070.1 748.63 L1070.72 755.61 L1071.33 745.45 L1072.15 743.55 L1072.67 740.37 L1073.18 704.81 L1073.9 698.46 L1074.51 706.71 L1075.23 705.44 L1076.25 698.46 L1077.28 694.9 L1078.3 696.55 L1078.81 708.62 L1079.33 713.06 L1080.15 702.27 L1080.86 699.73 L1081.58 698.46 L1082.4 696.55 L1083.22 701 L1083.94 709.89 L1084.65 697.19 L1085.47 698.46 L1086.29 700.36 L1086.7 706.08 L1087.32 699.73 L1088.04 698.46 L1089.06 695.92 L1090.08 698.46 L1090.8 704.81 L1091.42 726.4 L1092.13 739.1 L1092.65 742.91 L1093.47 737.83 L1094.18 742.91 L1095.21 745.45 L1096.23 746.09 L1097.26 745.45 L1097.97 747.36 L1098.79 744.82 L1099.31 742.91 L1099.82 721.32 L1100.54 699.09 L1101.36 711.16 L1102.07 699.09 L1102.89 702.27 L1103.71 699.73 L1104.43 706.08 L1105.15 697.19 L1105.97 704.81 L1106.79 700.36 L1107.5 697.19 L1108.32 704.17 L1109.04 706.08 L1109.55 709.89 L1110.27 721.32 L1110.88 703.54 L1111.6 698.46 L1112.63 695.66 L1113.65 699.73 L1114.68 698.46 L1115.39 706.08 L1116.01 693.12 L1116.73 697.19 L1117.75 695.92 L1118.77 694.9 L1119.8 695.28 L1120.82 694.39 L1121.54 702.27 L1122.36 697.19 L1123.18 695.92 L1123.9 704.17 L1124.92 698.46 L1125.95 697.19 L1126.97 695.92 L1128 697.19 L1129.02 694.65 L1129.74 694.39 L1130.56 703.54 L1131.58 704.81 L1132.61 706.71 L1133.43 708.62 L1134.14 705.82 L1134.66 716.24 L1135.17 728.94 L1135.68 744.18 L1136.19 739.1 L1136.91 748.63 L1137.53 730.85 L1138.24 732.75 L1138.96 734.66 L1139.78 732.75 L1140.6 740.37 L1141.32 744.18 L1142.03 735.29 L1142.85 731.48 L1143.67 740.37 L1144.39 747.99 L1144.9 732.75 L1145.62 735.29 L1146.34 726.4 L1146.95 734.02 L1147.77 735.29 L1148.49 747.99 L1149.21 749.26 L1150.03 742.91 L1150.85 737.2 L1151.56 745.45 L1152.28 753.07 L1153.1 750.53 L1153.92 744.18 L1154.64 742.28 L1155.35 745.45 L1156.17 745.45 L1156.99 751.8 L1157.71 761.97 L1157.71 783.4 L1066.01 783.4 Z" fill="#eab839" fill-opacity="0.1"/>
<path d="M1198.4 783.56 L1199.22 770.86 L1199.93 749.26 L1200.44 743.55 L1201.26 746.72 L1201.98 748.63 L1203.01 746.09 L1203.72 744.82 L1204.54 746.72 L1205.57 745.71 L1206.39 746.47 L1207.1 743.93 L1207.82 747.36 L1208.64 747.99 L1209.15 740.37 L1209.67 717.51 L1210.18 701.63 L1210.69 707.35 L1211.41 699.73 L1212.23 698.2 L1212.95 699.73 L1213.76 708.62 L1214.58 698.46 L1215.3 696.55 L1216.33 697.19 L1217.35 698.46 L1218.07 699.09 L1218.89 695.66 L1219.91 694.9 L1220.63 695.92 L1221.14 709.89 L1221.76 721.32 L1222.47 735.29 L1222.99 741.64 L1223.5 742.28 L1224.01 746.72 L1224.52 749.01 L1225.55 746.72 L1226.57 745.71 L1227.29 745.2 L1227.9 746.09 L1228.42 732.75 L1228.93 711.16 L1229.24 700.36 L1229.65 717.51 L1230.16 740.37 L1230.88 746.47 L1231.7 741.64 L1232.72 741.01 L1233.23 735.29 L1233.75 727.04 L1234.46 722.59 L1235.28 720.05 L1236.1 709.89 L1236.82 702.27 L1237.33 697.19 L1237.84 707.35 L1238.56 694.39 L1239.38 696.55 L1240.2 695.28 L1240.92 696.55 L1241.64 697.82 L1242.45 695.28 L1243.27 695.92 L1243.99 694.65 L1244.71 697.19 L1245.32 700.36 L1246.04 695.92 L1246.76 695.66 L1247.37 699.73 L1247.78 708.62 L1248.4 695.92 L1249.11 695.66 L1250.14 695.92 L1250.86 695.66 L1251.37 704.81 L1251.88 707.98 L1252.5 706.08 L1253.21 707.98 L1253.73 706.33 L1254.24 709.89 L1254.75 713.7 L1255.06 758.15 L1255.57 730.21 L1256.08 706.71 L1256.59 706.08 L1257 730.21 L1257.41 761.97 L1257.82 774.03 L1258.23 776.57 L1258.85 772.13 L1259.67 761.97 L1260.39 759.42 L1261.1 754.34 L1261.92 747.99 L1262.74 743.55 L1263.46 742.66 L1264.18 746.72 L1265 751.8 L1265.71 745.45 L1266.53 746.72 L1267.25 749.26 L1268.07 751.8 L1268.89 752.44 L1269.61 751.17 L1270.33 748.63 L1271.14 746.72 L1271.96 744.82 L1272.48 761.97 L1272.99 762.6 L1273.4 747.99 L1274.22 750.53 L1275.04 745.45 L1275.76 740.37 L1276.47 739.1 L1277.29 745.45 L1277.8 749.26 L1278.52 746.09 L1279.34 745.45 L1280.16 742.91 L1280.88 744.18 L1281.6 745.45 L1282.42 742.91 L1283.24 741.39 L1283.95 742.91 L1284.47 750.53 L1284.98 768.32 L1285.49 781.02 L1285.49 783.4 L1198.4 783.4 Z" fill="#7eb26d" fill-opacity="0.1"/>
<path d="M1198.4 783.56 L1199.22 770.86 L1199.93 749.26 L1200.44 743.55 L1201.26 746.72 L1201.98 748.63 L1203.01 746.09 L1203.72 744.82 L1204.54 746.72 L1205.57 745.71 L1206.39 746.47 L1207.1 743.93 L1207.82 747.36 L1208.64 747.99 L1209.15 740.37 L1209.67 717.51 L1210.18 701.63 L1210.69 707.35 L1211.41 699.73 L1212.23 698.2 L1212.95 699.73 L1213.76 708.62 L1214.58 698.46 L1215.3 696.55 L1216.33 697.19 L1217.35 698.46 L1218.07 699.09 L1218.89 695.66 L1219.91 694.9 L1220.63 695.92 L1221.14 709.89 L1221.76 721.32 L1222.47 735.29 L1222.99 741.64 L1223.5 742.28 L1224.01 746.72 L1224.52 749.01 L1225.55 746.72 L1226.57 745.71 L1227.29 745.2 L1227.9 746.09 L1228.42 732.75 L1228.93 711.16 L1229.24 700.36 L1229.65 717.51 L1230.16 740.37 L1230.88 746.47 L1231.7 741.64 L1232.72 741.01 L1233.23 735.29 L1233.75 727.04 L1234.46 722.59 L1235.28 720.05 L1236.1 709.89 L1236.82 702.27 L1237.33 697.19 L1237.84 707.35 L1238.56 694.39 L1239.38 696.55 L1240.2 695.28 L1240.92 696.55 L1241.64 697.82 L1242.45 695.28 L1243.27 695.92 L1243.99 694.65 L1244.71 697.19 L1245.32 700.36 L1246.04 695.92 L1246.76 695.66 L1247.37 699.73 L1247.78 708.62 L1248.4 695.92 L1249.11 695.66 L1250.14 695.92 L1250.86 695.66 L1251.37 704.81 L1251.88 707.98 L1252.5 706.08 L1253.21 707.98 L1253.73 706.33 L1254.24 709.89 L1254.75 713.7 L1255.06 758.15 L1255.57 730.21 L1256.08 706.71 L1256.59 706.08 L1257 730.21 L1257.41 761.97 L1257.82 774.03 L1258.23 776.57 L1258.85 772.13 L1259.67 761.97 L1260.39 759.42 L1261.1 754.34 L1261.92 747.99 L1262.74 743.55 L1263.46 742.66 L1264.18 746.72 L1265 751.8 L1265.71 745.45 L1266.53 746.72 L1267.25 749.26 L1268.07 751.8 L1268.89 752.44 L1269.61 751.17 L1270.33 748.63 L1271.14 746.72 L1271.96 744.82 L1272.48 761.97 L1272.99 762.6 L1273.4 747.99 L1274.22 750.53 L1275.04 745.45 L1275.76 740.37 L1276.47 739.1 L1277.29 745.45 L1277.8 749.26 L1278.52 746.09 L1279.34 745.45 L1280.16 742.91 L1280.88 744.18 L1281.6 745.45 L1282.42 742.91 L1283.24 741.39 L1283.95 742.91 L1284.47 750.53 L1284.98 768.32 L1285.49 781.02 L1285.49 783.4 L1198.4 783.4 Z" fill="#eab839" fill-opacity="0.1"/>
<path d="M1312.61 782.29 L1313.13 745.45 L1313.84 741.64 L1314.66 738.47 L1315.38 735.29 L1316.2 740.37 L1316.92 741.01 L1317.63 730.21 L1318.04 721.32 L1318.66 720.68 L1319.27 712.43 L1319.79 704.17 L1320.5 703.54 L1321.32 701.25 L1322.14 700.74 L1322.55 708.62 L1323.06 717.51 L1323.58 720.05 L1323.99 763.87 L1324.4 736.56 L1324.81 711.16 L1325.22 730.21 L1325.63 753.07 L1326.04 763.24 L1326.45 750.53 L1326.86 730.21 L1327.27 720.05 L1327.68 720.3 L1328.19 731.48 L1328.7 731.73 L1329.21 739.1 L1329.72 747.99 L1330.24 753.71 L1330.75 752.44 L1331.36 755.61 L1331.98 750.53 L1332.8 747.99 L1333.62 747.36 L1334.34 748.63 L1335.16 746.09 L1335.87 748.63 L1336.69 754.34 L1337.41 747.99 L1338.13 744.82 L1338.95 744.18 L1339.66 740.37 L1340.18 738.85 L1340.79 745.45 L1341.51 745.2 L1342.23 746.72 L1343.05 748.63 L1343.76 753.71 L1344.58 747.99 L1345.3 744.82 L1345.91 739.1 L1346.63 727.67 L1347.35 716.24 L1348.17 707.98 L1348.99 711.16 L1349.71 716.24 L1350.42 716.87 L1351.04 701.63 L1351.55 708.62 L1352.06 702.27 L1352.78 701.63 L1353.5 696.55 L1354.11 695.66 L1354.83 693.38 L1355.55 695.66 L1356.37 695.28 L1356.98 695.92 L1357.39 708.62 L1357.9 727.67 L1358.41 747.99 L1358.93 752.44 L1359.44 745.45 L1360.26 745.2 L1360.98 744.82 L1361.69 746.09 L1362.51 744.18 L1363.33 744.82 L1364.05 745.2 L1364.77 746.09 L1365.59 746.72 L1366.3 747.99 L1367.12 745.45 L1367.84 746.09 L1368.66 745.2 L1369.38 746.09 L1370.2 745.45 L1370.92 745.2 L1371.53 747.99 L1372.25 749.9 L1372.96 750.53 L1373.48 765.78 L1373.99 773.4 L1374.3 775.3 L1374.81 767.05 L1375.32 763.24 L1375.83 761.97 L1376.35 750.53 L1376.96 738.85 L1377.47 755.61 L1377.88 758.79 L1378.4 751.8 L1378.91 744.18 L1379.42 750.53 L1379.93 753.71 L1380.44 746.09 L1380.96 750.53 L1381.57 753.71 L1382.19 754.34 L1382.8 750.53 L1383.52 747.36 L1384.03 751.8 L1384.65 747.99 L1385.26 746.09 L1385.87 747.99 L1386.59 745.71 L1387.31 747.99 L1387.92 746.72 L1388.54 754.34 L1389.15 754.98 L1389.87 756.88 L1390.49 753.07 L1391 747.99 L1391.72 749.26 L1392.33 748.63 L1392.94 754.34 L1393.56 762.6 L1394.17 754.98 L1394.79 755.61 L1395.51 754.34 L1396.12 750.53 L1396.84 747.99 L1397.35 754.34 L1397.86 758.79 L1398.38 756.88 L1398.99 760.69 L1399.61 751.17 L1400.22 751.8 L1400.94 753.07 L1401.65 754.34 L1402.27 755.61 L1402.99 753.07 L1403.5 751.8 L1404.11 763.24 L1404.73 758.15 L1405.34 756.88 L1406.06 751.17 L1406.78 755.61 L1407.39 750.53 L1408.11 747.99 L1408.62 747.36 L1409.24 751.8 L1409.85 754.34 L1410.47 747.99 L1410.98 740.63 L1411.49 758.79 L1412 750.53 L1412.52 744.18 L1413.03 755.61 L1413.54 751.8 L1414.26 748.63 L1414.77 754.34 L1415.38 756.25 L1416 754.34 L1416.61 753.07 L1417.33 752.44 L1417.84 751.8 L1418.36 758.79 L1418.87 745.45 L1419.69 746.09 L1420.41 744.82 L1420.92 753.07 L1421.43 744.82 L1422.15 745.45 L1422.76 744.44 L1423.27 748.63 L1423.79 744.82 L1424.5 747.99 L1425.02 742.66 L1425.63 747.99 L1426.25 755.61 L1426.86 748.63 L1427.58 749.9 L1428.29 748.63 L1428.91 754.34 L1429.63 754.98 L1430.34 754.34 L1430.96 747.99 L1431.68 741.01 L1432.39 745.45 L1433.01 750.53 L1433.73 753.07 L1434.24 748.63 L1434.85 751.8 L1435.47 750.53 L1436.08 751.17 L1436.59 758.15 L1437.11 748.63 L1437.62 740.12 L1438.13 744.18 L1438.64 748.63 L1439.16 749.9 L1439.77 746.09 L1440.39 753.07 L1440.9 756.88 L1441.21 758.15 L1441.21 783.4 L1312.61 783.4 Z" fill="#7eb26d" fill-opacity="0.1"/>
<path d="M1312.61 782.29 L1313.13 745.45 L1313.84 741.64 L1314.66 738.47 L1315.38 735.29 L1316.2 740.37 L1316.92 741.01 L1317.63 730.21 L1318.04 721.32 L1318.66 720.68 L1319.27 712.43 L1319.79 704.17 L1320.5 703.54 L1321.32 701.25 L1322.14 700.74 L1322.55 708.62 L1323.06 717.51 L1323.58 720.05 L1323.99 763.87 L1324.4 736.56 L1324.81 711.16 L1325.22 730.21 L1325.63 753.07 L1326.04 763.24 L1326.45 750.53 L1326.86 730.21 L1327.27 720.05 L1327.68 720.3 L1328.19 731.48 L1328.7 731.73 L1329.21 739.1 L1329.72 747.99 L1330.24 753.71 L1330.75 752.44 L1331.36 755.61 L1331.98 750.53 L1332.8 747.99 L1333.62 747.36 L1334.34 748.63 L1335.16 746.09 L1335.87 748.63 L1336.69 754.34 L1337.41 747.99 L1338.13 744.82 L1338.95 744.18 L1339.66 740.37 L1340.18 738.85 L1340.79 745.45 L1341.51 745.2 L1342.23 746.72 L1343.05 748.63 L1343.76 753.71 L1344.58 747.99 L1345.3 744.82 L1345.91 739.1 L1346.63 727.67 L1347.35 716.24 L1348.17 707.98 L1348.99 711.16 L1349.71 716.24 L1350.42 716.87 L1351.04 701.63 L1351.55 708.62 L1352.06 702.27 L1352.78 701.63 L1353.5 696.55 L1354.11 695.66 L1354.83 693.38 L1355.55 695.66 L1356.37 695.28 L1356.98 695.92 L1357.39 708.62 L1357.9 727.67 L1358.41 747.99 L1358.93 752.44 L1359.44 745.45 L1360.26 745.2 L1360.98 744.82 L1361.69 746.09 L1362.51 744.18 L1363.33 744.82 L1364.05 745.2 L1364.77 746.09 L1365.59 746.72 L1366.3 747.99 L1367.12 745.45 L1367.84 746.09 L1368.66 745.2 L1369.38 746.09 L1370.2 745.45 L1370.92 745.2 L1371.53 747.99 L1372.25 749.9 L1372.96 750.53 L1373.48 765.78 L1373.99 773.4 L1374.3 775.3 L1374.81 767.05 L1375.32 763.24 L1375.83 761.97 L1376.35 750.53 L1376.96 738.85 L1377.47 755.61 L1377.88 758.79 L1378.4 751.8 L1378.91 744.18 L1379.42 750.53 L1379.93 753.71 L1380.44 746.09 L1380.96 750.53 L1381.57 753.71 L1382.19 754.34 L1382.8 750.53 L1383.52 747.36 L1384.03 751.8 L1384.65 747.99 L1385.26 746.09 L1385.87 747.99 L1386.59 745.71 L1387.31 747.99 L1387.92 746.72 L1388.54 754.34 L1389.15 754.98 L1389.87 756.88 L1390.49 753.07 L1391 747.99 L1391.72 749.26 L1392.33 748.63 L1392.94 754.34 L1393.56 762.6 L1394.17 754.98 L1394.79 755.61 L1395.51 754.34 L1396.12 750.53 L1396.84 747.99 L1397.35 754.34 L1397.86 758.79 L1398.38 756.88 L1398.99 760.69 L1399.61 751.17 L1400.22 751.8 L1400.94 753.07 L1401.65 754.34 L1402.27 755.61 L1402.99 753.07 L1403.5 751.8 L1404.11 763.24 L1404.73 758.15 L1405.34 756.88 L1406.06 751.17 L1406.78 755.61 L1407.39 750.53 L1408.11 747.99 L1408.62 747.36 L1409.24 751.8 L1409.85 754.34 L1410.47 747.99 L1410.98 740.63 L1411.49 758.79 L1412 750.53 L1412.52 744.18 L1413.03 755.61 L1413.54 751.8 L1414.26 748.63 L1414.77 754.34 L1415.38 756.25 L1416 754.34 L1416.61 753.07 L1417.33 752.44 L1417.84 751.8 L1418.36 758.79 L1418.87 745.45 L1419.69 746.09 L1420.41 744.82 L1420.92 753.07 L1421.43 744.82 L1422.15 745.45 L1422.76 744.44 L1423.27 748.63 L1423.79 744.82 L1424.5 747.99 L1425.02 742.66 L1425.63 747.99 L1426.25 755.61 L1426.86 748.63 L1427.58 749.9 L1428.29 748.63 L1428.91 754.34 L1429.63 754.98 L1430.34 754.34 L1430.96 747.99 L1431.68 741.01 L1432.39 745.45 L1433.01 750.53 L1433.73 753.07 L1434.24 748.63 L1434.85 751.8 L1435.47 750.53 L1436.08 751.17 L1436.59 758.15 L1437.11 748.63 L1437.62 740.12 L1438.13 744.18 L1438.64 748.63 L1439.16 749.9 L1439.77 746.09 L1440.39 753.07 L1440.9 756.88 L1441.21 758.15 L1441.21 783.4 L1312.61 783.4 Z" fill="#eab839" fill-opacity="0.1"/>
<path d="M1478.5 734.66 L1478.91 727.67 L1479.32 724.49 L1479.32 783.4 L1478.5 783.4 Z" fill="#7eb26d" fill-opacity="0.1"/>
<path d="M1478.5 734.66 L1478.91 727.67 L1479.32 724.49 L1479.32 783.4 L1478.5 783.4 Z" fill="#eab839" fill-opacity="0.1"/>
<line x1="971.5" y1="782.4" x2="1479.6" y2="782.4" stroke="#cb783c" stroke-width="2.7"/>
<path d="M973.28 778.18 L973.28 775.46 L974.81 767.3 L976.86 758.22 L978.91 748.24 L980.96 738.26 L981.99 732.82 L982.5 733.73 L984.03 723.75 L985.57 712.86 L986.6 713.77 L987.62 706.51 L988.34 711.95 L989.67 704.69 L990.69 701.97 L991.21 704.69 L992.74 693.81 L993.46 692.9 L994.08 712.86 L994.79 693.81 L995.82 691.99 L996.54 694.71 L997.35 687.45 L998.17 683.83 L998.89 685.64 L999.92 682.37 L1000.74 683.46 L1001.45 679.29 L1002.27 681.65 L1003.5 676.93 L1004.53 679.29 L1005.35 686.55 L1006.06 673.85 L1007.09 672.03 L1007.81 672.94 L1008.63 670.76 L1009.45 672.03 L1010.16 668.04 L1010.68 725.56 L1011.9 686.55 L1012.72 686 L1013.75 688.36 L1014.77 686.55 L1015.8 683.83 L1016.82 687.45 L1018.05 683.83 L1018.87 694.71 L1019.69 714.67 L1019.9 736.45 L1020.72 727.38 L1021.43 725.56 L1021.95 713.77 L1022.46 733.73 L1023.18 712.86 L1024 714.67 L1024.51 725.56 L1025.02 712.86 L1026.04 715.58 L1027.07 712.86 L1027.89 721.93 L1028.71 740.98 L1029.43 717.4 L1030.14 732.82 L1030.76 738.26 L1031.37 710.14 L1032.19 717.4 L1033.01 720.12 L1033.73 723.75 L1034.45 727.38 L1035.47 708.87 L1036.09 758.22" fill="none" stroke="#ef843c" stroke-width="1" stroke-linejoin="round"/>
<path d="M1066.01 727.38 L1066.83 704.69 L1067.54 707.41 L1068.57 718.3 L1069.59 729.19 L1070.1 733.73 L1070.72 743.71 L1071.33 729.19 L1072.15 726.47 L1072.67 721.93 L1073.18 671.12 L1073.9 662.05 L1074.51 673.85 L1075.23 672.03 L1076.25 662.05 L1077.28 656.97 L1078.3 659.33 L1078.81 676.57 L1079.33 682.92 L1080.15 667.49 L1080.86 663.87 L1081.58 662.05 L1082.4 659.33 L1083.22 665.68 L1083.94 678.38 L1084.65 660.24 L1085.47 662.05 L1086.29 664.77 L1086.7 672.94 L1087.32 663.87 L1088.04 662.05 L1089.06 658.42 L1090.08 662.05 L1090.8 671.12 L1091.42 701.97 L1092.13 720.12 L1092.65 725.56 L1093.47 718.3 L1094.18 725.56 L1095.21 729.19 L1096.23 730.1 L1097.26 729.19 L1097.97 731.91 L1098.79 728.28 L1099.31 725.56 L1099.82 694.71 L1100.54 662.96 L1101.36 680.2 L1102.07 662.96 L1102.89 667.49 L1103.71 663.87 L1104.43 672.94 L1105.15 660.24 L1105.97 671.12 L1106.79 664.77 L1107.5 660.24 L1108.32 670.22 L1109.04 672.94 L1109.55 678.38 L1110.27 694.71 L1110.88 669.31 L1111.6 662.05 L1112.63 658.06 L1113.65 663.87 L1114.68 662.05 L1115.39 672.94 L1116.01 654.43 L1116.73 660.24 L1117.75 658.42 L1118.77 656.97 L1119.8 657.51 L1120.82 656.24 L1121.54 667.49 L1122.36 660.24 L1123.18 658.42 L1123.9 670.22 L1124.92 662.05 L1125.95 660.24 L1126.97 658.42 L1128 660.24 L1129.02 656.61 L1129.74 656.24 L1130.56 669.31 L1131.58 671.12 L1132.61 673.85 L1133.43 676.57 L1134.14 672.58 L1134.66 687.45 L1135.17 705.6 L1135.68 727.38 L1136.19 720.12 L1136.91 733.73 L1137.53 708.32 L1138.24 711.04 L1138.96 713.77 L1139.78 711.04 L1140.6 721.93 L1141.32 727.38 L1142.03 714.67 L1142.85 709.23 L1143.67 721.93 L1144.39 732.82 L1144.9 711.04 L1145.62 714.67 L1146.34 701.97 L1146.95 712.86 L1147.77 714.67 L1148.49 732.82 L1149.21 734.63 L1150.03 725.56 L1150.85 717.4 L1151.56 729.19 L1152.28 740.08 L1153.1 736.45 L1153.92 727.38 L1154.64 724.65 L1155.35 729.19 L1156.17 729.19 L1156.99 738.26 L1157.71 752.78" fill="none" stroke="#ef843c" stroke-width="1" stroke-linejoin="round"/>
<path d="M1198.4 783.63 L1199.22 765.48 L1199.93 734.63 L1200.44 726.47 L1201.26 731 L1201.98 733.73 L1203.01 730.1 L1203.72 728.28 L1204.54 731 L1205.57 729.55 L1206.39 730.64 L1207.1 727.01 L1207.82 731.91 L1208.64 732.82 L1209.15 721.93 L1209.67 689.27 L1210.18 666.59 L1210.69 674.75 L1211.41 663.87 L1212.23 661.69 L1212.95 663.87 L1213.76 676.57 L1214.58 662.05 L1215.3 659.33 L1216.33 660.24 L1217.35 662.05 L1218.07 662.96 L1218.89 658.06 L1219.91 656.97 L1220.63 658.42 L1221.14 678.38 L1221.76 694.71 L1222.47 714.67 L1222.99 723.75 L1223.5 724.65 L1224.01 731 L1224.52 734.27 L1225.55 731 L1226.57 729.55 L1227.29 728.83 L1227.9 730.1 L1228.42 711.04 L1228.93 680.2 L1229.24 664.77 L1229.65 689.27 L1230.16 721.93 L1230.88 730.64 L1231.7 723.75 L1232.72 722.84 L1233.23 714.67 L1233.75 702.88 L1234.46 696.53 L1235.28 692.9 L1236.1 678.38 L1236.82 667.49 L1237.33 660.24 L1237.84 674.75 L1238.56 656.24 L1239.38 659.33 L1240.2 657.51 L1240.92 659.33 L1241.64 661.14 L1242.45 657.51 L1243.27 658.42 L1243.99 656.61 L1244.71 660.24 L1245.32 664.77 L1246.04 658.42 L1246.76 658.06 L1247.37 663.87 L1247.78 676.57 L1248.4 658.42 L1249.11 658.06 L1250.14 658.42 L1250.86 658.06 L1251.37 671.12 L1251.88 675.66 L1252.5 672.94 L1253.21 675.66 L1253.73 673.3 L1254.24 678.38 L1254.75 683.83 L1255.06 747.34 L1255.57 707.41 L1256.08 673.85 L1256.59 672.94 L1257 707.41 L1257.41 752.78 L1257.82 770.02 L1258.23 773.65 L1258.85 767.3 L1259.67 752.78 L1260.39 749.15 L1261.1 741.89 L1261.92 732.82 L1262.74 726.47 L1263.46 725.2 L1264.18 731 L1265 738.26 L1265.71 729.19 L1266.53 731 L1267.25 734.63 L1268.07 738.26 L1268.89 739.17 L1269.61 737.36 L1270.33 733.73 L1271.14 731 L1271.96 728.28 L1272.48 752.78 L1272.99 753.69 L1273.4 732.82 L1274.22 736.45 L1275.04 729.19 L1275.76 721.93 L1276.47 720.12 L1277.29 729.19 L1277.8 734.63 L1278.52 730.1 L1279.34 729.19 L1280.16 725.56 L1280.88 727.38 L1281.6 729.19 L1282.42 725.56 L1283.24 723.38 L1283.95 725.56 L1284.47 736.45 L1284.98 761.85 L1285.49 780" fill="none" stroke="#ef843c" stroke-width="1" stroke-linejoin="round"/>
<path d="M1312.61 781.81 L1313.13 729.19 L1313.84 723.75 L1314.66 719.21 L1315.38 714.67 L1316.2 721.93 L1316.92 722.84 L1317.63 707.41 L1318.04 694.71 L1318.66 693.81 L1319.27 682.01 L1319.79 670.22 L1320.5 669.31 L1321.32 666.04 L1322.14 665.32 L1322.55 676.57 L1323.06 689.27 L1323.58 692.9 L1323.99 755.5 L1324.4 716.49 L1324.81 680.2 L1325.22 707.41 L1325.63 740.08 L1326.04 754.59 L1326.45 736.45 L1326.86 707.41 L1327.27 692.9 L1327.68 693.26 L1328.19 709.23 L1328.7 709.59 L1329.21 720.12 L1329.72 732.82 L1330.24 740.98 L1330.75 739.17 L1331.36 743.71 L1331.98 736.45 L1332.8 732.82 L1333.62 731.91 L1334.34 733.73 L1335.16 730.1 L1335.87 733.73 L1336.69 741.89 L1337.41 732.82 L1338.13 728.28 L1338.95 727.38 L1339.66 721.93 L1340.18 719.75 L1340.79 729.19 L1341.51 728.83 L1342.23 731 L1343.05 733.73 L1343.76 740.98 L1344.58 732.82 L1345.3 728.28 L1345.91 720.12 L1346.63 703.79 L1347.35 687.45 L1348.17 675.66 L1348.99 680.2 L1349.71 687.45 L1350.42 688.36 L1351.04 666.59 L1351.55 676.57 L1352.06 667.49 L1352.78 666.59 L1353.5 659.33 L1354.11 658.06 L1354.83 654.79 L1355.55 658.06 L1356.37 657.51 L1356.98 658.42 L1357.39 676.57 L1357.9 703.79 L1358.41 732.82 L1358.93 739.17 L1359.44 729.19 L1360.26 728.83 L1360.98 728.28 L1361.69 730.1 L1362.51 727.38 L1363.33 728.28 L1364.05 728.83 L1364.77 730.1 L1365.59 731 L1366.3 732.82 L1367.12 729.19 L1367.84 730.1 L1368.66 728.83 L1369.38 730.1 L1370.2 729.19 L1370.92 728.83 L1371.53 732.82 L1372.25 735.54 L1372.96 736.45 L1373.48 758.22 L1373.99 769.11 L1374.3 771.83 L1374.81 760.04 L1375.32 754.59 L1375.83 752.78 L1376.35 736.45 L1376.96 719.75 L1377.47 743.71 L1377.88 748.24 L1378.4 738.26 L1378.91 727.38 L1379.42 736.45 L1379.93 740.98 L1380.44 730.1 L1380.96 736.45 L1381.57 740.98 L1382.19 741.89 L1382.8 736.45 L1383.52 731.91 L1384.03 738.26 L1384.65 732.82 L1385.26 730.1 L1385.87 732.82 L1386.59 729.55 L1387.31 732.82 L1387.92 731 L1388.54 741.89 L1389.15 742.8 L1389.87 745.52 L1390.49 740.08 L1391 732.82 L1391.72 734.63 L1392.33 733.73 L1392.94 741.89 L1393.56 753.69 L1394.17 742.8 L1394.79 743.71 L1395.51 741.89 L1396.12 736.45 L1396.84 732.82 L1397.35 741.89 L1397.86 748.24 L1398.38 745.52 L1398.99 750.96 L1399.61 737.36 L1400.22 738.26 L1400.94 740.08 L1401.65 741.89 L1402.27 743.71 L1402.99 740.08 L1403.5 738.26 L1404.11 754.59 L1404.73 747.34 L1405.34 745.52 L1406.06 737.36 L1406.78 743.71 L1407.39 736.45 L1408.11 732.82 L1408.62 731.91 L1409.24 738.26 L1409.85 741.89 L1410.47 732.82 L1410.98 722.29 L1411.49 748.24 L1412 736.45 L1412.52 727.38 L1413.03 743.71 L1413.54 738.26 L1414.26 733.73 L1414.77 741.89 L1415.38 744.61 L1416 741.89 L1416.61 740.08 L1417.33 739.17 L1417.84 738.26 L1418.36 748.24 L1418.87 729.19 L1419.69 730.1 L1420.41 728.28 L1420.92 740.08 L1421.43 728.28 L1422.15 729.19 L1422.76 727.74 L1423.27 733.73 L1423.79 728.28 L1424.5 732.82 L1425.02 725.2 L1425.63 732.82 L1426.25 743.71 L1426.86 733.73 L1427.58 735.54 L1428.29 733.73 L1428.91 741.89 L1429.63 742.8 L1430.34 741.89 L1430.96 732.82 L1431.68 722.84 L1432.39 729.19 L1433.01 736.45 L1433.73 740.08 L1434.24 733.73 L1434.85 738.26 L1435.47 736.45 L1436.08 737.36 L1436.59 747.34 L1437.11 733.73 L1437.62 721.57 L1438.13 727.38 L1438.64 733.73 L1439.16 735.54 L1439.77 730.1 L1440.39 740.08 L1440.9 745.52 L1441.21 747.34" fill="none" stroke="#ef843c" stroke-width="1" stroke-linejoin="round"/>
<path d="M1478.5 713.77 L1478.91 703.79 L1479.32 699.25" fill="none" stroke="#ef843c" stroke-width="1" stroke-linejoin="round"/>
<path d="M973.28 779.75 L973.28 777.84 L974.81 772.13 L976.86 765.78 L978.91 758.79 L980.96 751.8 L981.99 747.99 L982.5 748.63 L984.03 741.64 L985.57 734.02 L986.6 734.66 L987.62 729.58 L988.34 733.39 L989.67 728.31 L990.69 726.4 L991.21 728.31 L992.74 720.68 L993.46 720.05 L994.08 734.02 L994.79 720.68 L995.82 719.41 L996.54 721.32 L997.35 716.24 L998.17 713.7 L998.89 714.97 L999.92 712.68 L1000.74 713.44 L1001.45 710.52 L1002.27 712.17 L1003.5 708.87 L1004.53 710.52 L1005.35 715.6 L1006.06 706.71 L1007.09 705.44 L1007.81 706.08 L1008.63 704.55 L1009.45 705.44 L1010.16 702.65 L1010.68 742.91 L1011.9 715.6 L1012.72 715.22 L1013.75 716.87 L1014.77 715.6 L1015.8 713.7 L1016.82 716.24 L1018.05 713.7 L1018.87 721.32 L1019.69 735.29 L1019.9 750.53 L1020.72 744.18 L1021.43 742.91 L1021.95 734.66 L1022.46 748.63 L1023.18 734.02 L1024 735.29 L1024.51 742.91 L1025.02 734.02 L1026.04 735.93 L1027.07 734.02 L1027.89 740.37 L1028.71 753.71 L1029.43 737.2 L1030.14 747.99 L1030.76 751.8 L1031.37 732.12 L1032.19 737.2 L1033.01 739.1 L1033.73 741.64 L1034.45 744.18 L1035.47 731.23 L1036.09 765.78" fill="none" stroke="#eab839" stroke-width="1" stroke-linejoin="round"/>
<path d="M1066.01 744.18 L1066.83 728.31 L1067.54 730.21 L1068.57 737.83 L1069.59 745.45 L1070.1 748.63 L1070.72 755.61 L1071.33 745.45 L1072.15 743.55 L1072.67 740.37 L1073.18 704.81 L1073.9 698.46 L1074.51 706.71 L1075.23 705.44 L1076.25 698.46 L1077.28 694.9 L1078.3 696.55 L1078.81 708.62 L1079.33 713.06 L1080.15 702.27 L1080.86 699.73 L1081.58 698.46 L1082.4 696.55 L1083.22 701 L1083.94 709.89 L1084.65 697.19 L1085.47 698.46 L1086.29 700.36 L1086.7 706.08 L1087.32 699.73 L1088.04 698.46 L1089.06 695.92 L1090.08 698.46 L1090.8 704.81 L1091.42 726.4 L1092.13 739.1 L1092.65 742.91 L1093.47 737.83 L1094.18 742.91 L1095.21 745.45 L1096.23 746.09 L1097.26 745.45 L1097.97 747.36 L1098.79 744.82 L1099.31 742.91 L1099.82 721.32 L1100.54 699.09 L1101.36 711.16 L1102.07 699.09 L1102.89 702.27 L1103.71 699.73 L1104.43 706.08 L1105.15 697.19 L1105.97 704.81 L1106.79 700.36 L1107.5 697.19 L1108.32 704.17 L1109.04 706.08 L1109.55 709.89 L1110.27 721.32 L1110.88 703.54 L1111.6 698.46 L1112.63 695.66 L1113.65 699.73 L1114.68 698.46 L1115.39 706.08 L1116.01 693.12 L1116.73 697.19 L1117.75 695.92 L1118.77 694.9 L1119.8 695.28 L1120.82 694.39 L1121.54 702.27 L1122.36 697.19 L1123.18 695.92 L1123.9 704.17 L1124.92 698.46 L1125.95 697.19 L1126.97 695.92 L1128 697.19 L1129.02 694.65 L1129.74 694.39 L1130.56 703.54 L1131.58 704.81 L1132.61 706.71 L1133.43 708.62 L1134.14 705.82 L1134.66 716.24 L1135.17 728.94 L1135.68 744.18 L1136.19 739.1 L1136.91 748.63 L1137.53 730.85 L1138.24 732.75 L1138.96 734.66 L1139.78 732.75 L1140.6 740.37 L1141.32 744.18 L1142.03 735.29 L1142.85 731.48 L1143.67 740.37 L1144.39 747.99 L1144.9 732.75 L1145.62 735.29 L1146.34 726.4 L1146.95 734.02 L1147.77 735.29 L1148.49 747.99 L1149.21 749.26 L1150.03 742.91 L1150.85 737.2 L1151.56 745.45 L1152.28 753.07 L1153.1 750.53 L1153.92 744.18 L1154.64 742.28 L1155.35 745.45 L1156.17 745.45 L1156.99 751.8 L1157.71 761.97" fill="none" stroke="#eab839" stroke-width="1" stroke-linejoin="round"/>
<path d="M1198.4 783.56 L1199.22 770.86 L1199.93 749.26 L1200.44 743.55 L1201.26 746.72 L1201.98 748.63 L1203.01 746.09 L1203.72 744.82 L1204.54 746.72 L1205.57 745.71 L1206.39 746.47 L1207.1 743.93 L1207.82 747.36 L1208.64 747.99 L1209.15 740.37 L1209.67 717.51 L1210.18 701.63 L1210.69 707.35 L1211.41 699.73 L1212.23 698.2 L1212.95 699.73 L1213.76 708.62 L1214.58 698.46 L1215.3 696.55 L1216.33 697.19 L1217.35 698.46 L1218.07 699.09 L1218.89 695.66 L1219.91 694.9 L1220.63 695.92 L1221.14 709.89 L1221.76 721.32 L1222.47 735.29 L1222.99 741.64 L1223.5 742.28 L1224.01 746.72 L1224.52 749.01 L1225.55 746.72 L1226.57 745.71 L1227.29 745.2 L1227.9 746.09 L1228.42 732.75 L1228.93 711.16 L1229.24 700.36 L1229.65 717.51 L1230.16 740.37 L1230.88 746.47 L1231.7 741.64 L1232.72 741.01 L1233.23 735.29 L1233.75 727.04 L1234.46 722.59 L1235.28 720.05 L1236.1 709.89 L1236.82 702.27 L1237.33 697.19 L1237.84 707.35 L1238.56 694.39 L1239.38 696.55 L1240.2 695.28 L1240.92 696.55 L1241.64 697.82 L1242.45 695.28 L1243.27 695.92 L1243.99 694.65 L1244.71 697.19 L1245.32 700.36 L1246.04 695.92 L1246.76 695.66 L1247.37 699.73 L1247.78 708.62 L1248.4 695.92 L1249.11 695.66 L1250.14 695.92 L1250.86 695.66 L1251.37 704.81 L1251.88 707.98 L1252.5 706.08 L1253.21 707.98 L1253.73 706.33 L1254.24 709.89 L1254.75 713.7 L1255.06 758.15 L1255.57 730.21 L1256.08 706.71 L1256.59 706.08 L1257 730.21 L1257.41 761.97 L1257.82 774.03 L1258.23 776.57 L1258.85 772.13 L1259.67 761.97 L1260.39 759.42 L1261.1 754.34 L1261.92 747.99 L1262.74 743.55 L1263.46 742.66 L1264.18 746.72 L1265 751.8 L1265.71 745.45 L1266.53 746.72 L1267.25 749.26 L1268.07 751.8 L1268.89 752.44 L1269.61 751.17 L1270.33 748.63 L1271.14 746.72 L1271.96 744.82 L1272.48 761.97 L1272.99 762.6 L1273.4 747.99 L1274.22 750.53 L1275.04 745.45 L1275.76 740.37 L1276.47 739.1 L1277.29 745.45 L1277.8 749.26 L1278.52 746.09 L1279.34 745.45 L1280.16 742.91 L1280.88 744.18 L1281.6 745.45 L1282.42 742.91 L1283.24 741.39 L1283.95 742.91 L1284.47 750.53 L1284.98 768.32 L1285.49 781.02" fill="none" stroke="#eab839" stroke-width="1" stroke-linejoin="round"/>
<path d="M1312.61 782.29 L1313.13 745.45 L1313.84 741.64 L1314.66 738.47 L1315.38 735.29 L1316.2 740.37 L1316.92 741.01 L1317.63 730.21 L1318.04 721.32 L1318.66 720.68 L1319.27 712.43 L1319.79 704.17 L1320.5 703.54 L1321.32 701.25 L1322.14 700.74 L1322.55 708.62 L1323.06 717.51 L1323.58 720.05 L1323.99 763.87 L1324.4 736.56 L1324.81 711.16 L1325.22 730.21 L1325.63 753.07 L1326.04 763.24 L1326.45 750.53 L1326.86 730.21 L1327.27 720.05 L1327.68 720.3 L1328.19 731.48 L1328.7 731.73 L1329.21 739.1 L1329.72 747.99 L1330.24 753.71 L1330.75 752.44 L1331.36 755.61 L1331.98 750.53 L1332.8 747.99 L1333.62 747.36 L1334.34 748.63 L1335.16 746.09 L1335.87 748.63 L1336.69 754.34 L1337.41 747.99 L1338.13 744.82 L1338.95 744.18 L1339.66 740.37 L1340.18 738.85 L1340.79 745.45 L1341.51 745.2 L1342.23 746.72 L1343.05 748.63 L1343.76 753.71 L1344.58 747.99 L1345.3 744.82 L1345.91 739.1 L1346.63 727.67 L1347.35 716.24 L1348.17 707.98 L1348.99 711.16 L1349.71 716.24 L1350.42 716.87 L1351.04 701.63 L1351.55 708.62 L1352.06 702.27 L1352.78 701.63 L1353.5 696.55 L1354.11 695.66 L1354.83 693.38 L1355.55 695.66 L1356.37 695.28 L1356.98 695.92 L1357.39 708.62 L1357.9 727.67 L1358.41 747.99 L1358.93 752.44 L1359.44 745.45 L1360.26 745.2 L1360.98 744.82 L1361.69 746.09 L1362.51 744.18 L1363.33 744.82 L1364.05 745.2 L1364.77 746.09 L1365.59 746.72 L1366.3 747.99 L1367.12 745.45 L1367.84 746.09 L1368.66 745.2 L1369.38 746.09 L1370.2 745.45 L1370.92 745.2 L1371.53 747.99 L1372.25 749.9 L1372.96 750.53 L1373.48 765.78 L1373.99 773.4 L1374.3 775.3 L1374.81 767.05 L1375.32 763.24 L1375.83 761.97 L1376.35 750.53 L1376.96 738.85 L1377.47 755.61 L1377.88 758.79 L1378.4 751.8 L1378.91 744.18 L1379.42 750.53 L1379.93 753.71 L1380.44 746.09 L1380.96 750.53 L1381.57 753.71 L1382.19 754.34 L1382.8 750.53 L1383.52 747.36 L1384.03 751.8 L1384.65 747.99 L1385.26 746.09 L1385.87 747.99 L1386.59 745.71 L1387.31 747.99 L1387.92 746.72 L1388.54 754.34 L1389.15 754.98 L1389.87 756.88 L1390.49 753.07 L1391 747.99 L1391.72 749.26 L1392.33 748.63 L1392.94 754.34 L1393.56 762.6 L1394.17 754.98 L1394.79 755.61 L1395.51 754.34 L1396.12 750.53 L1396.84 747.99 L1397.35 754.34 L1397.86 758.79 L1398.38 756.88 L1398.99 760.69 L1399.61 751.17 L1400.22 751.8 L1400.94 753.07 L1401.65 754.34 L1402.27 755.61 L1402.99 753.07 L1403.5 751.8 L1404.11 763.24 L1404.73 758.15 L1405.34 756.88 L1406.06 751.17 L1406.78 755.61 L1407.39 750.53 L1408.11 747.99 L1408.62 747.36 L1409.24 751.8 L1409.85 754.34 L1410.47 747.99 L1410.98 740.63 L1411.49 758.79 L1412 750.53 L1412.52 744.18 L1413.03 755.61 L1413.54 751.8 L1414.26 748.63 L1414.77 754.34 L1415.38 756.25 L1416 754.34 L1416.61 753.07 L1417.33 752.44 L1417.84 751.8 L1418.36 758.79 L1418.87 745.45 L1419.69 746.09 L1420.41 744.82 L1420.92 753.07 L1421.43 744.82 L1422.15 745.45 L1422.76 744.44 L1423.27 748.63 L1423.79 744.82 L1424.5 747.99 L1425.02 742.66 L1425.63 747.99 L1426.25 755.61 L1426.86 748.63 L1427.58 749.9 L1428.29 748.63 L1428.91 754.34 L1429.63 754.98 L1430.34 754.34 L1430.96 747.99 L1431.68 741.01 L1432.39 745.45 L1433.01 750.53 L1433.73 753.07 L1434.24 748.63 L1434.85 751.8 L1435.47 750.53 L1436.08 751.17 L1436.59 758.15 L1437.11 748.63 L1437.62 740.12 L1438.13 744.18 L1438.64 748.63 L1439.16 749.9 L1439.77 746.09 L1440.39 753.07 L1440.9 756.88 L1441.21 758.15" fill="none" stroke="#eab839" stroke-width="1" stroke-linejoin="round"/>
<path d="M1478.5 734.66 L1478.91 727.67 L1479.32 724.49" fill="none" stroke="#eab839" stroke-width="1" stroke-linejoin="round"/>
<circle cx="1039.36" cy="782.1" r="1.6" fill="#f98d40"/>
<circle cx="1042.75" cy="782.1" r="1.6" fill="#f98d40"/>
<circle cx="1046.13" cy="782.1" r="1.6" fill="#f98d40"/>
<circle cx="1049.3" cy="782.1" r="1.6" fill="#f98d40"/>
<circle cx="1053.2" cy="782.1" r="0.5" fill="#f98d40"/>
<circle cx="1056.27" cy="782.1" r="0.5" fill="#f98d40"/>
<circle cx="1060.17" cy="782.1" r="1.6" fill="#f98d40"/>
<circle cx="1063.44" cy="782.1" r="1.6" fill="#f98d40"/>
<circle cx="1161" cy="782.1" r="1.6" fill="#f98d40"/>
<circle cx="1164.38" cy="782.1" r="1.6" fill="#f98d40"/>
<circle cx="1168.17" cy="782.1" r="0.5" fill="#f98d40"/>
<circle cx="1171.75" cy="782.1" r="1.6" fill="#f98d40"/>
<circle cx="1175.03" cy="782.1" r="1.6" fill="#f98d40"/>
<circle cx="1178.41" cy="782.1" r="1.6" fill="#f98d40"/>
<circle cx="1181.8" cy="782.1" r="1.6" fill="#f98d40"/>
<circle cx="1185.08" cy="782.1" r="1.6" fill="#f98d40"/>
<circle cx="1188.46" cy="782.1" r="1.6" fill="#f98d40"/>
<circle cx="1192.04" cy="782.1" r="0.5" fill="#f98d40"/>
<circle cx="1195.32" cy="782.1" r="0.5" fill="#f98d40"/>
<circle cx="1288.56" cy="782.1" r="1.6" fill="#f98d40"/>
<circle cx="1291.94" cy="782.1" r="1.6" fill="#f98d40"/>
<circle cx="1295.22" cy="782.1" r="1.6" fill="#f98d40"/>
<circle cx="1298.61" cy="782.1" r="1.6" fill="#f98d40"/>
<circle cx="1301.88" cy="782.1" r="1.6" fill="#f98d40"/>
<circle cx="1305.27" cy="782.1" r="1.6" fill="#f98d40"/>
<circle cx="1309.26" cy="782.1" r="1.6" fill="#f98d40"/>
<circle cx="1444.48" cy="782.1" r="1.6" fill="#f98d40"/>
<circle cx="1448.07" cy="782.1" r="0.5" fill="#f98d40"/>
<circle cx="1451.35" cy="782.1" r="0.5" fill="#f98d40"/>
<circle cx="1455.04" cy="782.1" r="1.6" fill="#f98d40"/>
<circle cx="1458.32" cy="782.1" r="1.6" fill="#f98d40"/>
<circle cx="1461.7" cy="782.1" r="1.6" fill="#f98d40"/>
<circle cx="1464.98" cy="782.1" r="1.6" fill="#f98d40"/>
<circle cx="1468.36" cy="782.1" r="1.6" fill="#f98d40"/>
<circle cx="1471.74" cy="782.1" r="1.6" fill="#f98d40"/>
<circle cx="1475.43" cy="782.1" r="0.5" fill="#f98d40"/>
<line x1="973" y1="636.5" x2="973" y2="783.4" stroke="#127c98" stroke-width="2" stroke-dasharray="2.6,2.3"/>
<path d="M967.4 790.7 L978.4 790.7 L972.9 785.2 Z" fill="#19b9dc"/>
<rect x="1502.8" y="681.4" width="309" height="27.6" fill="#1a1c20"/>
<rect x="1502.8" y="736.6" width="309" height="27.6" fill="#1a1c20"/>
<text x="1722.2" y="647" text-anchor="end" class="h" font-size="13.1" fill="#33a2e5">max</text>
<text x="1783.5" y="647" text-anchor="end" class="h" font-size="13.1" fill="#33a2e5">avg</text>
<path d="M1789 640.2 L1792.4 643.6 L1795.8 640.2" fill="none" stroke="#33a2e5" stroke-width="1.3"/>
<rect x="1517.6" y="666.4" width="11" height="2" fill="#6ed0e0"/>
<text x="1539.5" y="671.8" font-size="13.2" fill="#c7d0d9">8_<tspan dy="0.9" class="c">生成订单信息</tspan></text>
<text x="1722.4" y="671.8" text-anchor="end" font-size="13.2" fill="#c7d0d9">5.00 MiB</text>
<text x="1801.3" y="671.8" text-anchor="end" font-size="13.2" fill="#c7d0d9">2.62 MiB</text>
<rect x="1517.6" y="693.85" width="11" height="2" fill="#ef843c"/>
<text x="1539.5" y="699.25" font-size="13.2" fill="#c7d0d9">all</text>
<text x="1722.4" y="699.25" text-anchor="end" font-size="13.2" fill="#c7d0d9">5.00 MiB</text>
<text x="1801.3" y="699.25" text-anchor="end" font-size="13.2" fill="#c7d0d9">2.62 MiB</text>
<rect x="1517.6" y="721.3" width="11" height="2" fill="#7eb26d"/>
<text x="1539.5" y="726.7" font-size="13.2" fill="#c7d0d9">8_<tspan dy="0.9" class="c">生成订单信息</tspan></text>
<text x="1722.4" y="726.7" text-anchor="end" font-size="13.2" fill="#c7d0d9">3.51 MiB</text>
<text x="1801.3" y="726.7" text-anchor="end" font-size="13.2" fill="#c7d0d9">1.84 MiB</text>
<rect x="1517.6" y="748.75" width="11" height="2" fill="#eab839"/>
<text x="1539.5" y="754.15" font-size="13.2" fill="#c7d0d9">all</text>
<text x="1722.4" y="754.15" text-anchor="end" font-size="13.2" fill="#c7d0d9">3.51 MiB</text>
<text x="1801.3" y="754.15" text-anchor="end" font-size="13.2" fill="#c7d0d9">1.84 MiB</text>
</svg>
</body></html>
